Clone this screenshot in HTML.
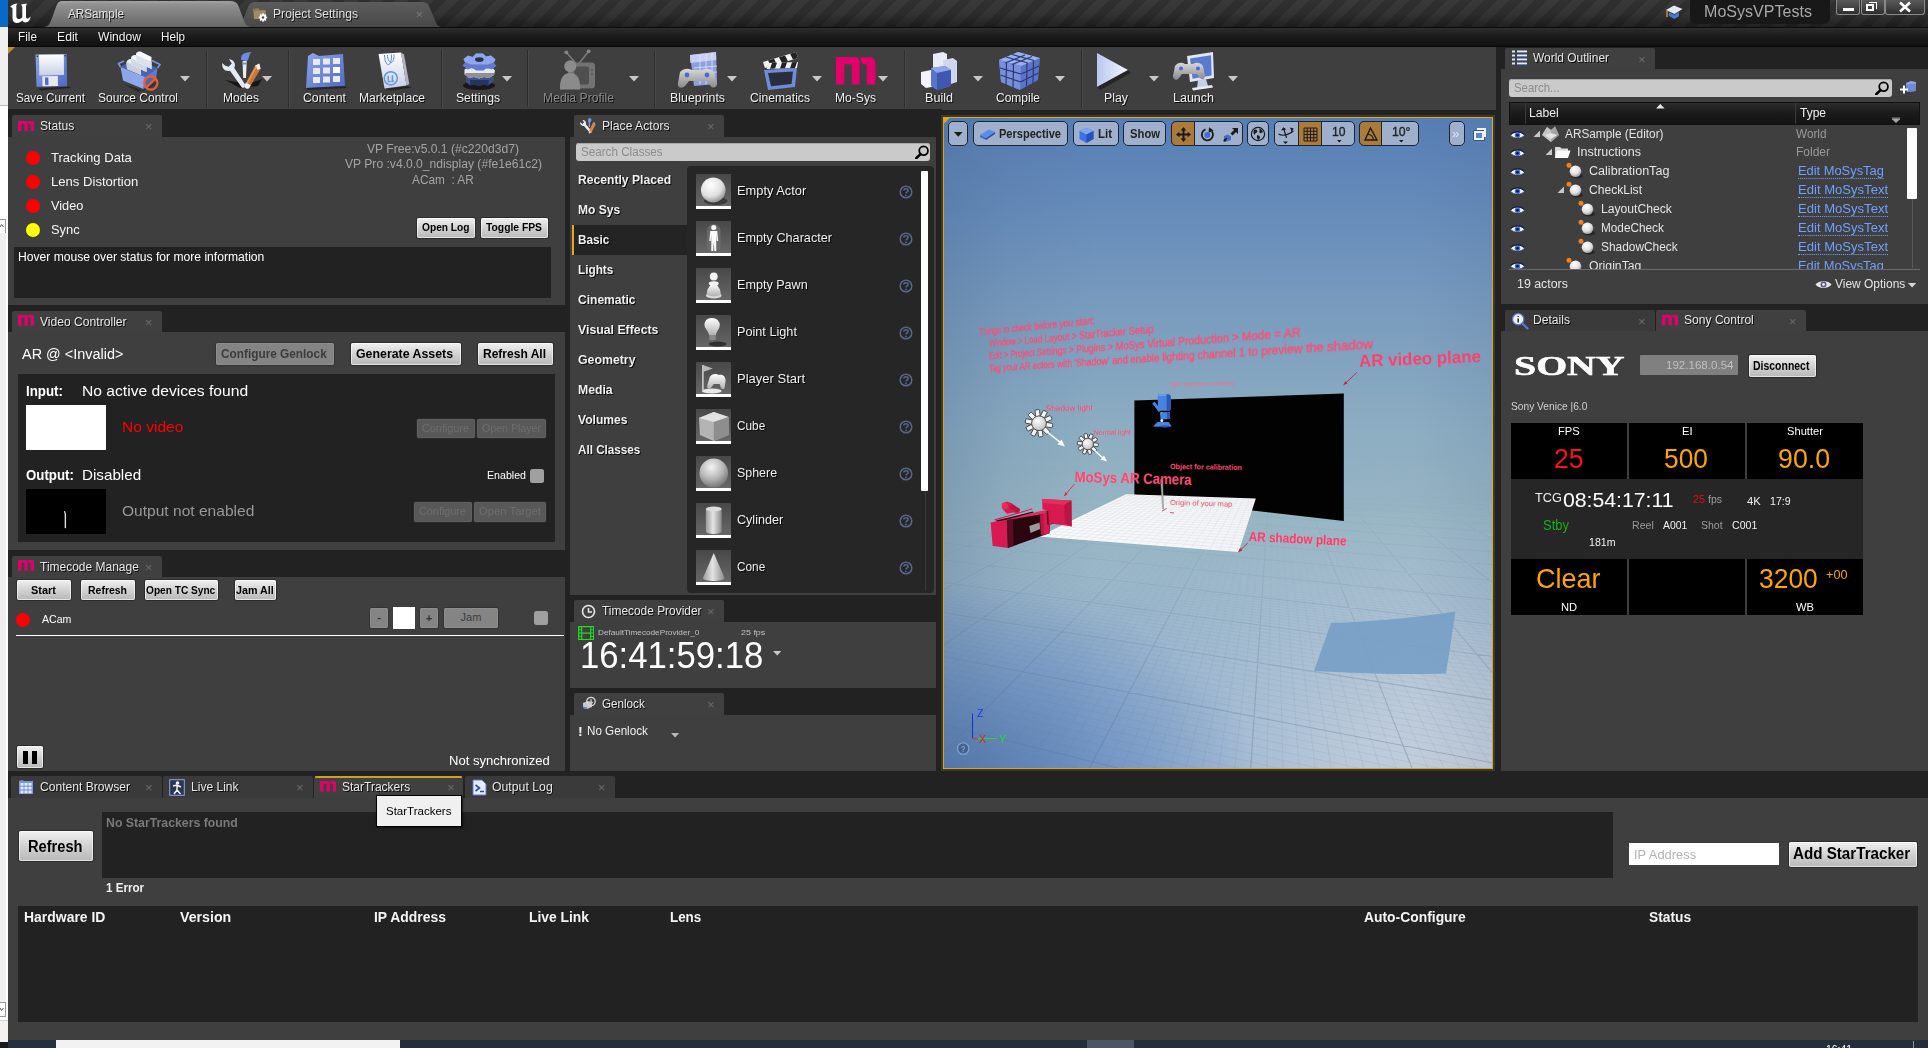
<!DOCTYPE html>
<html><head><meta charset="utf-8"><title>ARSample - Unreal Editor</title>
<style>
html,body{margin:0;padding:0;}
body{width:1928px;height:1048px;overflow:hidden;background:#222;position:relative;font-family:"Liberation Sans",sans-serif;}
div,span,svg{position:absolute;box-sizing:border-box;}
.t{white-space:nowrap;line-height:1;transform-origin:0 50%;}
.sh{text-shadow:1px 1px 0 rgba(0,0,0,.85);}
.btn{background:linear-gradient(#f0f0f0,#cfcfcf 55%,#b8b8b8);border-radius:2px;box-shadow:0 0 0 1px #2c2c2c,inset 0 0 0 1px rgba(255,255,255,.6);}
.btnd{background:#848484;border-radius:2px;box-shadow:0 0 0 1px #333,inset 0 0 0 1px #8e8e8e;}
.btnd2{background:#585858;border-radius:2px;box-shadow:0 0 0 1px #2a2a2a,inset 0 0 0 1px #5f5f5f;}
.tab{background:#404040;border-radius:2px 2px 0 0;}
.tabi{background:#3a3a3a;border-radius:2px 2px 0 0;}
.pn{background:#3f3f3f;}
.vb{background:#9fb0cc;border:1px solid #1c2433;border-radius:5px;}
</style></head><body>
<div style="left:0px;top:0px;width:8px;height:1048px;background:#ffffff;"></div>
<div style="left:0px;top:0px;width:8px;height:27px;background:#0a68c8;"></div>
<div style="left:0px;top:27px;width:8px;height:79px;background:#f0f0f0;"></div>
<div style="left:0px;top:105px;width:8px;height:1px;background:#bdbdbd;"></div>
<div style="left:0px;top:218.5px;width:6px;height:15px;background:#fff;border:1px solid #9a9a9a;border-left:none;"></div>
<div style="left:0px;top:233px;width:5.9px;height:770px;background:#f0f0f0;"></div>
<svg style="left:0;top:223px" width="4" height="5"><path d="M0 4 L1.5 1.5 L3.5 4" stroke="#555" fill="none" stroke-width="1"/></svg>
<div style="left:0px;top:1002px;width:6px;height:15px;background:#fff;border:1px solid #9a9a9a;border-left:none;"></div>
<svg style="left:0;top:1007px" width="4" height="5"><path d="M0 1 L1.5 3.5 L3.5 1" stroke="#555" fill="none" stroke-width="1"/></svg>
<div style="left:0px;top:1020.5px;width:8px;height:21.5px;background:#f3f2f1;"></div>
<div style="left:0px;top:1020px;width:8px;height:1px;background:#d0d0d0;"></div>
<div style="left:8px;top:0px;width:1920px;height:28px;background:repeating-linear-gradient(135deg,#303030 0 8.85px,#393939 8.85px 17.7px);"></div>
<div style="left:8px;top:0px;width:1920px;height:28px;background:linear-gradient(rgba(0,0,0,0),rgba(0,0,0,.1) 50%,rgba(0,0,0,.45));"></div>
<svg style="left:8px;top:0" width="460" height="28" viewBox="8 0 460 28">
<defs><linearGradient id="tg1" x1="0" y1="0" x2="0" y2="1"><stop offset="0" stop-color="#a2a2a2"/><stop offset=".15" stop-color="#909090"/><stop offset="1" stop-color="#686868"/></linearGradient>
<linearGradient id="tg2" x1="0" y1="0" x2="0" y2="1"><stop offset="0" stop-color="#5c5c5c"/><stop offset="1" stop-color="#484848"/></linearGradient></defs>
<path d="M240 27 L248 7 Q250 2 255 2 L422 2 Q427 2 429 6 L434 18 C436 23 437 27 442 27 Z" fill="url(#tg2)"/>
<path d="M44 27 C49 27 50 23 52 18 L56 7 C57.5 2.5 59 1 63 1 L230 1 Q236 1 238 5 L243 18 C245 23 246 27 251 27 Z" fill="url(#tg1)"/>
</svg>
<div style="left:8px;top:27px;width:1920px;height:1px;background:#0c0c0c;"></div>
<svg style="left:9px;top:1px" width="24" height="25" viewBox="0 0 24 25"><path fill="#fff" d="M1 6 C3 3.5 6 2.5 8.5 2.5 C7.5 3.5 7.3 4.5 7.3 6 L7.3 15 C7.3 17 8.3 18 9.8 18 C11 18 12.3 17.2 13.3 16.2 L13.3 6.5 C13.3 5 12.8 4.3 11.8 3.8 C13.8 2.8 16.3 2.5 18.3 2.8 C17.3 3.5 17 4.5 17 6 L17 15.5 C17 17 17.5 17.6 18.5 17.6 C19.5 17.6 20.5 16.8 21.5 15.5 C21.5 18.5 19 21.5 16.5 21.5 C15 21.5 14 20.8 13.3 19.5 C12 21 10 22 8 22 C5.3 22 3.5 20.3 3.5 17.3 L3.5 8 C3.5 6.8 2.5 6.2 1 6 Z"/></svg>
<span class="t sh" style="left:67.50px;top:7.50px;font-size:12.5px;color:#e4e4e4;transform:scaleX(0.9373);">ARSample</span>
<span class="t sh" style="left:272.50px;top:8.00px;font-size:12.5px;color:#e0e0e0;transform:scaleX(0.9710);">Project Settings</span>
<span class="t" style="left:415.50px;top:7.78px;font-size:13px;color:#777;transform:scaleX(1.0000);">×</span>
<svg style="left:252px;top:6px" width="16" height="16" viewBox="0 0 16 16"><path d="M1 3 L6 2 L8 4 L13 4 L13 12 L2 13 Z" fill="#8a7a5c"/><path d="M2 5 L14 4.5 L13 13 L2 13 Z" fill="#a08c68"/><circle cx="11" cy="11.5" r="3.2" fill="#fff"/><circle cx="11" cy="11.5" r="1.3" fill="#444"/><path d="M11 7.3 V15.7 M6.8 11.5 H15.2 M8 8.5 L14 14.5 M14 8.5 L8 14.5" stroke="#fff" stroke-width="1.4"/><circle cx="11" cy="11.5" r="1.2" fill="#444"/></svg>
<div style="left:1690px;top:0px;width:140px;height:23.5px;background:#181818;border-radius:0 0 6px 6px;"></div>
<span class="t" style="left:1703.50px;top:3.32px;font-size:17px;color:#a8a8a8;transform:scaleX(0.9448);">MoSysVPTests</span>
<svg style="left:1664px;top:3px" width="20" height="18" viewBox="0 0 20 18"><path d="M2 7 L10 2.5 L18.5 6 L10.5 11 Z" fill="#dfe8f4"/><path d="M5 9.5 L5 13 L10.5 16 L15 13.2 L15 9 L10.5 11.8 Z" fill="#4a78c8"/><path d="M3 7.5 V14" stroke="#d9a23a" stroke-width="1.3"/></svg>
<div style="left:1836px;top:0px;width:24px;height:15px;background:linear-gradient(#5a5a5a,#2e2e2e);border:1px solid #8a8a8a;border-top:none;border-radius:0 0 3px 3px;"></div>
<div style="left:1860.5px;top:0px;width:24px;height:15px;background:linear-gradient(#5a5a5a,#2e2e2e);border:1px solid #8a8a8a;border-top:none;border-radius:0 0 3px 3px;"></div>
<div style="left:1885px;top:0px;width:40px;height:15px;background:linear-gradient(#5a5a5a,#2e2e2e);border:1px solid #8a8a8a;border-top:none;border-radius:0 0 3px 3px;"></div>
<div style="left:1843px;top:8px;width:11px;height:3px;background:#fff;"></div>
<div style="left:1866px;top:4px;width:8px;height:7px;border:2px solid #fff;"></div>
<div style="left:1869px;top:2px;width:8px;height:7px;border:1px solid #fff;border-left:none;border-bottom:none;"></div>
<svg style="left:1897.5px;top:1px" width="14" height="12" viewBox="0 0 14 12"><path d="M2 1.5 L12 10.5 M12 1.5 L2 10.5" stroke="#fff" stroke-width="2.6"/></svg>
<div style="left:8px;top:28px;width:1920px;height:19px;background:linear-gradient(#2d2d2d,#1a1a1a 45%,#101010);"></div>
<div style="left:8px;top:46px;width:1920px;height:1px;background:#070707;"></div>
<span class="t sh" style="left:17.50px;top:31.00px;font-size:12.5px;color:#f2f2f2;transform:scaleX(0.9434);">File</span>
<span class="t sh" style="left:56.50px;top:31.00px;font-size:12.5px;color:#f2f2f2;transform:scaleX(0.9750);">Edit</span>
<span class="t sh" style="left:97.50px;top:31.00px;font-size:12.5px;color:#f2f2f2;transform:scaleX(0.9672);">Window</span>
<span class="t sh" style="left:160.50px;top:31.00px;font-size:12.5px;color:#f2f2f2;transform:scaleX(0.9336);">Help</span>
<div style="left:8px;top:47px;width:1488px;height:63px;background:#3f3f3f;"></div>
<div style="left:8px;top:110px;width:1493px;height:6px;background:#222;"></div>
<svg style="left:8px;top:47px" width="8" height="8"><path d="M0 0 H7 L0 7 Z" fill="#b8922a"/></svg>
<div style="left:206px;top:50px;width:1px;height:57px;background:#2c2c2c;"></div>
<div style="left:207px;top:50px;width:1px;height:57px;background:#4a4a4a;"></div>
<div style="left:288px;top:50px;width:1px;height:57px;background:#2c2c2c;"></div>
<div style="left:289px;top:50px;width:1px;height:57px;background:#4a4a4a;"></div>
<div style="left:441px;top:50px;width:1px;height:57px;background:#2c2c2c;"></div>
<div style="left:442px;top:50px;width:1px;height:57px;background:#4a4a4a;"></div>
<div style="left:527px;top:50px;width:1px;height:57px;background:#2c2c2c;"></div>
<div style="left:528px;top:50px;width:1px;height:57px;background:#4a4a4a;"></div>
<div style="left:654px;top:50px;width:1px;height:57px;background:#2c2c2c;"></div>
<div style="left:655px;top:50px;width:1px;height:57px;background:#4a4a4a;"></div>
<div style="left:904px;top:50px;width:1px;height:57px;background:#2c2c2c;"></div>
<div style="left:905px;top:50px;width:1px;height:57px;background:#4a4a4a;"></div>
<div style="left:1081px;top:50px;width:1px;height:57px;background:#2c2c2c;"></div>
<div style="left:1082px;top:50px;width:1px;height:57px;background:#4a4a4a;"></div>
<span class="t sh" style="left:15.50px;top:91.80px;font-size:12.5px;color:#f0f0f0;transform:scaleX(0.9370);">Save Current</span>
<span class="t sh" style="left:97.50px;top:91.80px;font-size:12.5px;color:#f0f0f0;transform:scaleX(0.9596);">Source Control</span>
<span class="t sh" style="left:222.50px;top:91.80px;font-size:12.5px;color:#f0f0f0;transform:scaleX(0.9596);">Modes</span>
<span class="t sh" style="left:302.50px;top:91.80px;font-size:12.5px;color:#f0f0f0;transform:scaleX(0.9822);">Content</span>
<span class="t sh" style="left:358.50px;top:91.80px;font-size:12.5px;color:#f0f0f0;transform:scaleX(0.9694);">Marketplace</span>
<span class="t sh" style="left:455.50px;top:91.80px;font-size:12.5px;color:#f0f0f0;transform:scaleX(0.9742);">Settings</span>
<span class="t sh" style="left:542.50px;top:91.80px;font-size:12.5px;color:#8a8a8a;transform:scaleX(0.9733);">Media Profile</span>
<span class="t sh" style="left:669.50px;top:91.80px;font-size:12.5px;color:#f0f0f0;transform:scaleX(0.9895);">Blueprints</span>
<span class="t sh" style="left:749.50px;top:91.80px;font-size:12.5px;color:#f0f0f0;transform:scaleX(0.9706);">Cinematics</span>
<span class="t sh" style="left:834.50px;top:91.80px;font-size:12.5px;color:#f0f0f0;transform:scaleX(0.9678);">Mo-Sys</span>
<span class="t sh" style="left:924.50px;top:91.80px;font-size:12.5px;color:#f0f0f0;transform:scaleX(1.0074);">Build</span>
<span class="t sh" style="left:995.50px;top:91.80px;font-size:12.5px;color:#f0f0f0;transform:scaleX(0.9597);">Compile</span>
<span class="t sh" style="left:1103.50px;top:91.80px;font-size:12.5px;color:#f0f0f0;transform:scaleX(0.9870);">Play</span>
<span class="t sh" style="left:1172.50px;top:91.80px;font-size:12.5px;color:#f0f0f0;transform:scaleX(0.9999);">Launch</span>
<svg style="left:180px;top:76px" width="10" height="6"><path d="M0 0 H10 L5 5.5 Z" fill="#c8c8c8"/></svg>
<svg style="left:262px;top:76px" width="10" height="6"><path d="M0 0 H10 L5 5.5 Z" fill="#c8c8c8"/></svg>
<svg style="left:502px;top:76px" width="10" height="6"><path d="M0 0 H10 L5 5.5 Z" fill="#c8c8c8"/></svg>
<svg style="left:629px;top:76px" width="10" height="6"><path d="M0 0 H10 L5 5.5 Z" fill="#c8c8c8"/></svg>
<svg style="left:727px;top:76px" width="10" height="6"><path d="M0 0 H10 L5 5.5 Z" fill="#c8c8c8"/></svg>
<svg style="left:812px;top:76px" width="10" height="6"><path d="M0 0 H10 L5 5.5 Z" fill="#c8c8c8"/></svg>
<svg style="left:878px;top:76px" width="10" height="6"><path d="M0 0 H10 L5 5.5 Z" fill="#c8c8c8"/></svg>
<svg style="left:973px;top:76px" width="10" height="6"><path d="M0 0 H10 L5 5.5 Z" fill="#c8c8c8"/></svg>
<svg style="left:1055px;top:76px" width="10" height="6"><path d="M0 0 H10 L5 5.5 Z" fill="#c8c8c8"/></svg>
<svg style="left:1149px;top:76px" width="10" height="6"><path d="M0 0 H10 L5 5.5 Z" fill="#c8c8c8"/></svg>
<svg style="left:1228px;top:76px" width="10" height="6"><path d="M0 0 H10 L5 5.5 Z" fill="#c8c8c8"/></svg>
<svg style="left:8px;top:47px" width="1493" height="62" viewBox="8 47 1493 62">
<defs>
<linearGradient id="bl" x1="0" y1="0" x2="1" y2="1"><stop offset="0" stop-color="#8fa6ea"/><stop offset="1" stop-color="#5068c0"/></linearGradient>
<linearGradient id="wh" x1="0" y1="0" x2="0" y2="1"><stop offset="0" stop-color="#ffffff"/><stop offset="1" stop-color="#c9d0e6"/></linearGradient>
<linearGradient id="gr" x1="0" y1="0" x2="0" y2="1"><stop offset="0" stop-color="#d8d8d8"/><stop offset="1" stop-color="#8a8a8a"/></linearGradient>
<linearGradient id="pl" x1="0" y1="0" x2="1" y2="0"><stop offset="0" stop-color="#b8c8ee"/><stop offset="1" stop-color="#f4f7ff"/></linearGradient>
</defs>
<!-- Save -->
<g><path d="M38 88.5 L69 86.5 L71 88 L41 90.5 Z" fill="#111" opacity=".6"/><path d="M35.5 54.5 L66.5 54 L67.2 86.3 L36.5 86.8 Z" fill="url(#bl)"/><path d="M39 54.8 L63.8 54.4 L64 75 L39.3 75.4 Z" fill="url(#wh)"/><path d="M42.3 76.2 L57.8 76 L58 86 L42.5 86.2 Z" fill="#e6e9f4"/><path d="M45 77.5 L48.3 77.4 L48.5 85 L45.2 85 Z" fill="#5068c0"/><circle cx="37.3" cy="56.3" r=".8" fill="#223"/><circle cx="65.2" cy="55.8" r=".8" fill="#223"/></g>
<!-- Source Control -->
<g><path d="M124 84 L142 90 L160 80 L150 88 L138 92 Z" fill="#111" opacity=".5"/>
<path d="M120.5 67 L134 59 L157.5 68 L145 77 Z" fill="#4c64b8"/>
<path d="M120.5 67 L145 77 L143.5 89 L123 80.5 Z" fill="#8ea6ea"/><path d="M145 77 L157.5 68 L156 79 L143.5 89 Z" fill="#5f7cd2"/>
<path d="M126.5 62 C128 59 130 58.5 132 59.5 L141 64 L141 75 L127 69 Z" fill="#e9edf2"/><path d="M126.5 62 L141 68 L141 75 L127 69Z" fill="#c9d0da"/>
<path d="M131 57.5 C132.5 55 134.5 54.5 136.5 55.5 L146.5 60.5 L146.5 72 L131.5 65 Z" fill="#f2f4f7"/><path d="M131 58.5 L146.5 65 L146.5 72 L131.5 65Z" fill="#d3d9e2"/>
<path d="M136 53.5 C137.5 51.5 139.5 51 141.5 52 L151.5 57 L151.5 69 L136.5 62 Z" fill="#f7f8fa"/><path d="M136 55 L151.5 62 L151.5 69 L136.5 62Z" fill="#dde2ea"/>
<path d="M120.5 67 L118.5 63.5 L124 61 M157.5 68 L160 64.5 L152 60.5" fill="none" stroke="#7c96e2" stroke-width="1.6"/>
<circle cx="150.8" cy="83.1" r="6.6" fill="#3f3f3f" fill-opacity=".35" stroke="#e2603c" stroke-width="2.3"/><path d="M146.2 87.7 L155.4 78.5" stroke="#e2603c" stroke-width="2.3"/></g>
<!-- Modes -->
<g><path d="M225 80 L240 88 L258 86 L262 79 L248 84 Z" fill="#0c0c0c" opacity=".8"/>
<path d="M222.3 63 C221.5 68.5 225 71.8 230 70.8 L241.5 87 C243 89 246.5 87 245.3 84.8 L234.3 68 C236.3 63.5 233.5 59.5 229 59.3 L231.8 63.6 L228.6 66.8 L224.8 65.6 Z" fill="#e3ebf8"/>
<path d="M241.3 60 C240.3 55 243.5 52.3 251.5 52 C248.5 54.5 249.8 58.5 246.8 61 Z" fill="#6f8cde"/><path d="M242.5 61 H246.7 L246 78 H243.2 Z" fill="#e8ecf4"/><path d="M242.6 62.5 H246.6 V64.5 H242.6Z" fill="#8a94a8"/>
<path d="M259.3 63.5 L260.6 68.8 L249.3 87.8 C248 89.8 243.5 88 244.5 85.5 L255 65.8 Z" fill="#c9783a"/><path d="M255 65.8 L259.3 63.5 L260.6 68.8 L257.5 69.8Z" fill="#f3f3f3"/><path d="M244.5 85.5 L246 82.5 L250.8 85.2 L249.3 87.8 C248 89.8 243.5 88 244.5 85.5Z" fill="#eef2f8"/><path d="M256.5 66.5 L247 83.5" stroke="#e9a064" stroke-width="1.2"/></g>
<!-- Content -->
<g><path d="M308 56 L313 53 L319 56 L343 54 L345 86 L306 88 Z" fill="url(#bl)"/>
<g fill="#e6eaf8"><rect x="313" y="59" width="7" height="6"/><rect x="323" y="58.5" width="7" height="6"/><rect x="333" y="58" width="7" height="6"/><rect x="313" y="68" width="7" height="6"/><rect x="323" y="67.5" width="7" height="6"/><rect x="333" y="67" width="7" height="6" fill="#fff"/><rect x="313" y="77" width="7" height="6"/><rect x="323" y="76.5" width="7" height="6"/><rect x="333" y="76" width="7" height="6"/></g><path d="M306 88 L345 86 L347 88 L308 90 Z" fill="#151515" opacity=".6"/></g>
<!-- Marketplace -->
<g><path d="M386 89 L407 86 L412 87.5 L391 90.5 Z" fill="#0c0c0c" opacity=".55"/>
<path d="M378.5 54 L401 52.5 L406.5 85.5 L384.5 88.5 Z" fill="url(#wh)"/><path d="M401 52.5 L404 54.5 L409.3 84 L406.5 85.5 Z" fill="#b9b2c4"/>
<path d="M384.5 55 C385 68 392 68 391.5 54.5 M387.5 55 C388 65 394.5 65 394 54.5" fill="none" stroke="#5b86da" stroke-width="1"/>
<circle cx="390.8" cy="78.3" r="6.6" fill="none" stroke="#5e98e2" stroke-width="1.5"/><path d="M387.5 75.5 C388.5 75.3 389 75.8 389 76.8 V80 C389 81.6 391.2 81.6 391.6 80.4 V76.2 C391.6 75.4 392.4 75 393.2 75.2 V80 C393.2 80.8 393.8 81 394.4 80.6 C393.8 82.6 391.6 82.8 391.2 81.6 C390.2 83 387.6 82.6 387.6 80.4 Z" fill="#5e98e2"/></g>
<!-- Settings -->
<g><ellipse cx="479" cy="85.5" rx="16" ry="4.5" fill="#0c0c0c" opacity=".75"/>
<path d="M466 77 L470 74.5 L474 76 L478 74 L483 74 L486 76 L491 75 L494 78 L493 82 L488 85.5 L483 84.5 L479 86 L474 84.5 L470 85.5 L466 82 Z" fill="#3d5188"/><path d="M470 80 L489 80 L488 85.5 L483 84.5 L479 86 L474 84.5 L470 85.5Z" fill="#26335c"/>
<path d="M464.5 69.5 L469 67 L473 68.5 L478 66.5 L483 66.5 L487 68.5 L492 67.5 L495 70.5 L494 75 L489 78 L484 77 L479 78.5 L474 77 L469 78 L464.5 74.5 Z" fill="#e9e9ec"/><path d="M466 73 L494 73 L494 75 L489 78 L484 77 L479 78.5 L474 77 L469 78 L464.5 74.5Z" fill="#8f8f96"/>
<path d="M463.5 59 L468 55.5 L472.5 57 L476 53.5 L483 53.5 L486 56.5 L491 55.5 L495.5 59.5 L494 63 L496.5 66 L491.5 69.5 L487 68 L483.5 70.5 L476 70.5 L472.5 68 L467.5 69.5 L462.5 65.5 L465 62.5 Z" fill="#5f7ad0"/><path d="M463.5 59 L468 55.5 L472.5 57 L476 53.5 L483 53.5 L486 56.5 L491 55.5 L495.5 59.5 L494 62 L488 64.5 L471 64.5 L465 62 Z" fill="#8fa6ea"/><ellipse cx="479.3" cy="59.6" rx="4.3" ry="2.3" fill="#28304e"/></g>
<!-- Media Profile (disabled) -->
<g><path d="M566.5 52.5 L576 63.5 M588.5 51.5 L579 63.5" stroke="#7e7e7e" stroke-width="1.4"/><circle cx="566.3" cy="52.3" r="1.9" fill="#868686"/><circle cx="588.7" cy="51.3" r="1.9" fill="#868686"/>
<rect x="568" y="62.5" width="27" height="26" rx="3.5" fill="#737373"/><rect x="574" y="66.5" width="15" height="18" rx="2" fill="#4f4f4f"/><circle cx="592" cy="70" r="1" fill="#5a5a5a"/><circle cx="592" cy="74" r="1" fill="#5a5a5a"/>
<circle cx="570.3" cy="66.3" r="6" fill="#8b8b8b"/><path d="M560 89.5 C559.5 78 563.5 73 570 73 C577 73 580.5 78 580 89.5 Z" fill="#8b8b8b"/></g>
<!-- Blueprints -->
<g><path d="M690 55 L716 52 L717 84 L694 86 Z" fill="#8ea0e0"/><path d="M690 55 L716 52 L716.3 60 L690.3 63 Z" fill="#c8d0f0"/><path d="M700 55 V84 M706 54 V84 M712 53 V84 M694 68 L717 66 M694 74 L717 72" stroke="#dfe6ff" stroke-width=".8"/><path d="M680 72 C684 68 688 68 692 70 L702 70 C706 68 710 68 714 72 L717 84 C717 88 712 89 710 85 L707 81 L689 81 L685 86 C682 89 677 88 678 83 Z" fill="url(#gr)"/><circle cx="687" cy="75" r="2.4" fill="#4c6ad0"/><circle cx="707" cy="75" r="2.4" fill="#4c6ad0"/></g>
<!-- Cinematics -->
<g><path d="M763 62 L796 52 L798 58 L765 68 Z" fill="#f4f4f4"/><path d="M768 60.5 L774 58.7 L777 64.5 L771 66.3 Z M779 57.2 L785 55.4 L788 61.2 L782 63 Z M790 53.8 L796 52 L798 58 L793 59.5 Z" fill="#222"/><path d="M766 63 L798 62 L797 68 L767 69 Z" fill="#f0f0f0"/><path d="M772 63 L777 62.8 L775 68.6 L770 68.8 Z M782 62.5 L787 62.3 L785 68.2 L780 68.4 Z M792 62.2 L797 62 L795 68 L790 68.2 Z" fill="#222"/><path d="M764 70 L797 68 L795 87 L768 90 Z" fill="#6f8ad8"/><path d="M768 73 L793 71.5 L791.5 84 L771 86.3 Z" fill="#2a2e3c"/></g>
<!-- Build -->
<g><path d="M933 54 L943 52 L947 54 L947 80 L933 82 Z" fill="#e8ecf8"/><path d="M943 60 L953 58 L957 61 L957 82 L945 86 Z" fill="#cfd6ee"/><path d="M921 72 L931 70 L937 73 L937 86 L926 88 L921 84 Z" fill="#f2f4fa"/><path d="M931 68 L945 66 L951 70 L951 86 L937 90 L931 86 Z" fill="#5a74cc"/><path d="M931 68 L945 66 L951 70 L937 73 Z" fill="#8ea4e6"/><path d="M937 73 L951 70 L951 86 L937 90 Z" fill="#4058b0"/></g>
<!-- Compile -->
<g><path d="M999 60 L1018 52 L1040 58 L1038 80 L1020 90 L1001 82 Z" fill="#5a74cc"/><path d="M999 60 L1018 52 L1040 58 L1021 66 Z" fill="#9ab0ee"/><path d="M999 60 L1021 66 L1020 90 L1001 82 Z" fill="#7890dc"/><path d="M1006 57 L1028 63 M1012 54.5 L1034 60.5 M1006.5 62 L1006 85 M1013.5 64 L1013 88 M1000 68 L1021 74 M1000.5 75 L1020.5 82 M1027 63.5 L1026.5 86 M1033.5 61 L1033 83 M1021 74 L1039 66 M1020.5 82 L1038.5 73 M1025 55 L1005 63 M1032 56.5 L1012 64.5" stroke="#2c3870" stroke-width="1.2"/></g>
<!-- Play -->
<g><path d="M1097 53 L1128 70 L1097 87 Z" fill="url(#pl)"/><path d="M1097 87 L1128 70 L1131 73 L1100 90 Z" fill="#111" opacity=".55"/></g>
<!-- Launch -->
<g><path d="M1187 56 L1213 52 L1214 78 L1190 82 Z" fill="#dfe6f8"/><path d="M1190 58.5 L1211 55.3 L1211.6 75.6 L1192.5 78.8 Z" fill="#5a7ad0"/><path d="M1198 80 L1206 79 L1208 86 L1197 88 Z" fill="#c8d0e8"/><path d="M1192 88 L1212 85 L1213 87.5 L1193 90.5 Z" fill="#e8ecf8"/><path d="M1175 66 C1178 62 1182 62 1185 64 L1193 64 C1196 62 1200 62 1203 66 L1205 76 C1205 80 1201 80 1199 77 L1197 74 L1182 74 L1179 78 C1177 81 1173 80 1173 76 Z" fill="url(#gr)"/><circle cx="1181" cy="68.5" r="2" fill="#4c6ad0"/><circle cx="1198" cy="68.5" r="2" fill="#4c6ad0"/></g>
</svg>
<svg style="left:836.2px;top:57.1px" width="39.5" height="27.5" viewBox="0 0 39.5 27.5" preserveAspectRatio="none"><path fill="#e4006c" d="M0 0 H19 C22 0 23.75 2 23.75 5 V27.5 H15.8 V8.2 C15.8 7.6 15.4 7.25 14.8 7.25 H8.3 V27.5 H0 Z"/><path fill="#e4006c" d="M23.9 .3 H33.5 C37 .3 39.5 2.6 39.5 6.2 V27.5 H30.8 V9 C30.8 7.8 30.2 7.25 29 7.25 H26.3 Z"/></svg>
<div style="left:8px;top:109px;width:557px;height:6px;background:#222;"></div>
<div style="left:565px;top:109px;width:6px;height:670px;background:#222;"></div>
<div class="tab" style="left:12px;top:115px;width:150px;height:22px;"></div>
<span class="t sh" style="left:40.00px;top:120.20px;font-size:12.5px;color:#e8e8e8;transform:scaleX(0.9680);">Status</span>
<span class="t" style="left:144.70px;top:120.28px;font-size:13px;color:#6a6a6a;transform:scaleX(1.0000);">×</span>
<svg style="left:17.9px;top:120.5px" width="16.2" height="10.8" viewBox="0 0 39.5 27.5" preserveAspectRatio="none"><path fill="#e4006c" d="M0 0 H19 C22 0 23.75 2 23.75 5 V27.5 H15.8 V8.2 C15.8 7.6 15.4 7.25 14.8 7.25 H8.3 V27.5 H0 Z"/><path fill="#e4006c" d="M23.9 .3 H33.5 C37 .3 39.5 2.6 39.5 6.2 V27.5 H30.8 V9 C30.8 7.8 30.2 7.25 29 7.25 H26.3 Z"/></svg>
<div class="pn" style="left:8px;top:137px;width:557px;height:168px;"></div>
<div style="left:26px;top:151px;width:14px;height:14px;background:#ff0000;border-radius:50%;"></div>
<span class="t" style="left:50.60px;top:150.98px;font-size:13px;color:#f4f4f4;transform:scaleX(1.0045);">Tracking Data</span>
<div style="left:26px;top:175px;width:14px;height:14px;background:#ff0000;border-radius:50%;"></div>
<span class="t" style="left:50.60px;top:174.98px;font-size:13px;color:#f4f4f4;transform:scaleX(1.0068);">Lens Distortion</span>
<div style="left:26px;top:199px;width:14px;height:14px;background:#ff0000;border-radius:50%;"></div>
<span class="t" style="left:50.60px;top:198.98px;font-size:13px;color:#f4f4f4;transform:scaleX(0.9783);">Video</span>
<div style="left:26px;top:223px;width:14px;height:14px;background:#ffff00;border-radius:50%;"></div>
<span class="t" style="left:50.60px;top:222.98px;font-size:13px;color:#f4f4f4;transform:scaleX(0.9930);">Sync</span>
<span class="t" style="left:366.50px;top:143.02px;font-size:12px;color:#a4a4a4;transform:scaleX(1.0097);">VP Free:v5.0.1 (#c220d3d7)</span>
<span class="t" style="left:344.50px;top:158.42px;font-size:12px;color:#a4a4a4;transform:scaleX(1.0090);">VP Pro :v4.0.0_ndisplay (#fe1e61c2)</span>
<span class="t" style="left:411.50px;top:173.52px;font-size:12px;color:#a4a4a4;transform:scaleX(0.9843);white-space:pre;">ACam  : AR</span>
<div class="btn" style="left:417px;top:218px;width:58px;height:20px;"></div>
<span class="t" style="left:421.50px;top:221.66px;font-size:11px;color:#000;transform:scaleX(0.9255);font-weight:bold;">Open Log</span>
<div class="btn" style="left:481px;top:218px;width:67px;height:20px;"></div>
<span class="t" style="left:485.50px;top:221.66px;font-size:11px;color:#000;transform:scaleX(0.9383);font-weight:bold;">Toggle FPS</span>
<div style="left:14px;top:247px;width:537px;height:50.5px;background:#222;"></div>
<span class="t" style="left:17.80px;top:250.72px;font-size:12px;color:#fff;transform:scaleX(1.0090);">Hover mouse over status for more information</span>
<div style="left:8px;top:305px;width:557px;height:5.5px;background:#222;"></div>
<div class="tab" style="left:12px;top:310.5px;width:150px;height:21.5px;"></div>
<span class="t sh" style="left:40.00px;top:315.70px;font-size:12.5px;color:#e8e8e8;transform:scaleX(0.9687);">Video Controller</span>
<span class="t" style="left:144.70px;top:315.78px;font-size:13px;color:#6a6a6a;transform:scaleX(1.0000);">×</span>
<svg style="left:17.9px;top:315.2px" width="16.2" height="10.8" viewBox="0 0 39.5 27.5" preserveAspectRatio="none"><path fill="#e4006c" d="M0 0 H19 C22 0 23.75 2 23.75 5 V27.5 H15.8 V8.2 C15.8 7.6 15.4 7.25 14.8 7.25 H8.3 V27.5 H0 Z"/><path fill="#e4006c" d="M23.9 .3 H33.5 C37 .3 39.5 2.6 39.5 6.2 V27.5 H30.8 V9 C30.8 7.8 30.2 7.25 29 7.25 H26.3 Z"/></svg>
<div class="pn" style="left:8px;top:332px;width:557px;height:217.5px;"></div>
<span class="t" style="left:21.70px;top:346.48px;font-size:15.5px;color:#fff;transform:scaleX(0.9321);">AR @ &lt;Invalid&gt;</span>
<div class="btnd" style="left:216px;top:343px;width:117.5px;height:22px;"></div>
<span class="t" style="left:220.50px;top:347.50px;font-size:12.5px;color:#3c3c3c;transform:scaleX(0.9454);font-weight:bold;">Configure Genlock</span>
<div class="btn" style="left:350.5px;top:343px;width:110px;height:22px;"></div>
<span class="t" style="left:355.50px;top:347.50px;font-size:12.5px;color:#000;transform:scaleX(0.9878);font-weight:bold;">Generate Assets</span>
<div class="btn" style="left:477.5px;top:343px;width:75px;height:22px;"></div>
<span class="t" style="left:482.50px;top:347.50px;font-size:12.5px;color:#000;transform:scaleX(0.9615);font-weight:bold;">Refresh All</span>
<div style="left:18px;top:374px;width:537px;height:167.5px;background:#222;"></div>
<span class="t" style="left:25.50px;top:383.62px;font-size:14.5px;color:#fff;transform:scaleX(0.9191);font-weight:bold;">Input:</span>
<span class="t" style="left:81.70px;top:383.62px;font-size:14.5px;color:#fff;transform:scaleX(1.0789);">No active devices found</span>
<div style="left:26px;top:405px;width:80px;height:45px;background:#fff;"></div>
<span class="t" style="left:121.50px;top:419.20px;font-size:15px;color:#ff0000;transform:scaleX(1.0355);">No video</span>
<div class="btnd2" style="left:417px;top:418.5px;width:58px;height:19.5px;"></div>
<span class="t" style="left:421.50px;top:422.74px;font-size:11.5px;color:#6e6e6e;transform:scaleX(0.9425);">Configure</span>
<div class="btnd2" style="left:477px;top:418.5px;width:69px;height:19.5px;"></div>
<span class="t" style="left:481.50px;top:422.74px;font-size:11.5px;color:#6e6e6e;transform:scaleX(0.9229);">Open Player</span>
<span class="t" style="left:25.50px;top:467.62px;font-size:14.5px;color:#fff;transform:scaleX(0.9152);font-weight:bold;">Output:</span>
<span class="t" style="left:81.70px;top:467.62px;font-size:14.5px;color:#fff;transform:scaleX(1.0475);">Disabled</span>
<span class="t" style="left:486.70px;top:470.36px;font-size:11px;color:#fff;transform:scaleX(0.9661);">Enabled</span>
<div style="left:530px;top:468.5px;width:14px;height:14.5px;background:#a0a0a0;border-radius:2.5px;"></div>
<div style="left:26px;top:489px;width:80px;height:45px;background:#000;"></div>
<svg style="left:62px;top:509px" width="6" height="20"><path d="M2.5 2 L3.6 5 L3.6 19 L3 19 L3 5 Z" fill="#fff" stroke="#fff" stroke-width=".6"/></svg>
<span class="t" style="left:121.50px;top:503.62px;font-size:14.5px;color:#989898;transform:scaleX(1.0725);">Output not enabled</span>
<div class="btnd2" style="left:414px;top:502px;width:58px;height:19.5px;"></div>
<span class="t" style="left:418.50px;top:506.14px;font-size:11.5px;color:#6e6e6e;transform:scaleX(0.9425);">Configure</span>
<div class="btnd2" style="left:474px;top:502px;width:72px;height:19.5px;"></div>
<span class="t" style="left:478.50px;top:506.14px;font-size:11.5px;color:#6e6e6e;transform:scaleX(0.9828);">Open Target</span>
<div style="left:8px;top:549.5px;width:557px;height:6px;background:#222;"></div>
<div class="tab" style="left:12px;top:555.5px;width:150px;height:21.5px;"></div>
<span class="t sh" style="left:40.00px;top:560.70px;font-size:12.5px;color:#e8e8e8;transform:scaleX(0.9587);">Timecode Manage</span>
<span class="t" style="left:144.70px;top:560.78px;font-size:13px;color:#6a6a6a;transform:scaleX(1.0000);">×</span>
<svg style="left:17.9px;top:560px" width="16.2" height="10.8" viewBox="0 0 39.5 27.5" preserveAspectRatio="none"><path fill="#e4006c" d="M0 0 H19 C22 0 23.75 2 23.75 5 V27.5 H15.8 V8.2 C15.8 7.6 15.4 7.25 14.8 7.25 H8.3 V27.5 H0 Z"/><path fill="#e4006c" d="M23.9 .3 H33.5 C37 .3 39.5 2.6 39.5 6.2 V27.5 H30.8 V9 C30.8 7.8 30.2 7.25 29 7.25 H26.3 Z"/></svg>
<div class="pn" style="left:8px;top:577px;width:557px;height:194px;"></div>
<div class="btn" style="left:17px;top:580.2px;width:54.3px;height:20px;"></div>
<span class="t" style="left:30.50px;top:584.66px;font-size:11px;color:#000;transform:scaleX(0.9934);font-weight:bold;">Start</span>
<div class="btn" style="left:80.7px;top:580.2px;width:54.4px;height:20px;"></div>
<span class="t" style="left:87.60px;top:584.66px;font-size:11px;color:#000;transform:scaleX(0.9522);font-weight:bold;">Refresh</span>
<div class="btn" style="left:144.6px;top:580.2px;width:73.6px;height:20px;"></div>
<span class="t" style="left:145.80px;top:584.66px;font-size:11px;color:#000;transform:scaleX(0.9205);font-weight:bold;">Open TC Sync</span>
<div class="btn" style="left:234.7px;top:580.2px;width:41.4px;height:20px;"></div>
<span class="t" style="left:235.70px;top:584.66px;font-size:11px;color:#000;transform:scaleX(0.9711);font-weight:bold;">Jam All</span>
<div style="left:16px;top:612.8px;width:14px;height:14px;background:#ff0000;border-radius:50%;"></div>
<span class="t" style="left:41.50px;top:614.14px;font-size:11.5px;color:#fff;transform:scaleX(0.9170);">ACam</span>
<div class="btnd" style="left:370px;top:608px;width:18.3px;height:20px;"></div>
<span class="t" style="left:377.17px;top:612.16px;font-size:11px;color:#333;transform:scaleX(1.0000);font-weight:bold;">-</span>
<div style="left:392.6px;top:606.8px;width:22.5px;height:22.3px;background:#fff;"></div>
<div class="btnd" style="left:419.8px;top:608px;width:18.6px;height:20px;"></div>
<span class="t" style="left:425.79px;top:612.66px;font-size:11px;color:#333;transform:scaleX(1.0000);font-weight:bold;">+</span>
<div class="btnd" style="left:443.8px;top:608px;width:54.4px;height:20px;"></div>
<span class="t" style="left:460.61px;top:612.46px;font-size:11px;color:#3c3c3c;transform:scaleX(1.0000);">Jam</span>
<div style="left:534px;top:611px;width:14px;height:14px;background:#a0a0a0;border-radius:2.5px;"></div>
<div style="left:16px;top:634.7px;width:547.5px;height:1.2px;background:#fff;"></div>
<div class="btn" style="left:17px;top:746.3px;width:26.3px;height:21.7px;"></div>
<div style="left:23px;top:750.5px;width:5px;height:13.5px;background:#000;"></div>
<div style="left:32px;top:750.5px;width:5px;height:13.5px;background:#000;"></div>
<span class="t" style="left:448.90px;top:753.58px;font-size:13px;color:#fff;transform:scaleX(1.0036);">Not synchronized</span>
<div style="left:8px;top:771px;width:557px;height:5px;background:#222;"></div>
<div style="left:571px;top:109px;width:370px;height:6px;background:#222;"></div>
<div style="left:936px;top:109px;width:6px;height:670px;background:#222;"></div>
<div class="tab" style="left:574px;top:115px;width:150px;height:22px;"></div>
<span class="t sh" style="left:602.00px;top:120.20px;font-size:12.5px;color:#e8e8e8;transform:scaleX(0.9716);">Place Actors</span>
<span class="t" style="left:707.00px;top:120.28px;font-size:13px;color:#6a6a6a;transform:scaleX(1.0000);">×</span>
<svg style="left:579px;top:117px" width="18" height="18" viewBox="0 0 18 18"><path d="M1 5 C1 8 3 9 5 9 L11 16 L13 14.5 L7 7.5 C7.5 5 6 3 3.5 3 L5 5.2 L3.5 7 Z" fill="#e8ecf4"/><path d="M10 1 C12.5 1 13 3 12 4.5 L11 5.2 V10 H9.6 V5.2 C8.6 4 8.8 2 10 1Z" fill="#7a94e0"/><path d="M15.5 5 L16.5 7.5 L12.5 15.5 L9.8 16.5 L10.2 13.8 L14 5.6 Z" fill="#d08a48"/><path d="M10.2 13.8 L12.5 15.5 L9.8 16.5 Z" fill="#f0e0c0"/></svg>
<div class="pn" style="left:570px;top:137px;width:366px;height:457.5px;"></div>
<div style="left:576px;top:143px;width:354px;height:17.9px;background:#cacaca;border-radius:3px;box-shadow:inset 0 1px 0 #a8a8a8;"></div>
<span class="t" style="left:580.70px;top:146.00px;font-size:12.5px;color:#8c8c8c;transform:scaleX(0.9322);">Search Classes</span>
<svg style="left:914.5px;top:144.5px" width="14.5" height="14.5" viewBox="0 0 14 14"><circle cx="8.3" cy="5.6" r="4.2" fill="none" stroke="#000" stroke-width="1.7"/><path d="M5.3 8.8 L1.2 12.8" stroke="#000" stroke-width="2.4" stroke-linecap="round"/></svg>
<div style="left:572px;top:225px;width:115.2px;height:30px;background:#242424;"></div>
<div style="left:572px;top:225px;width:2px;height:30px;background:#e8a317;"></div>
<span class="t sh" style="left:577.60px;top:173.80px;font-size:12.5px;color:#f0f0f0;transform:scaleX(0.9711);font-weight:bold;">Recently Placed</span>
<span class="t sh" style="left:577.60px;top:203.80px;font-size:12.5px;color:#f0f0f0;transform:scaleX(0.9666);font-weight:bold;">Mo Sys</span>
<span class="t sh" style="left:577.60px;top:233.80px;font-size:12.5px;color:#f0f0f0;transform:scaleX(0.9384);font-weight:bold;">Basic</span>
<span class="t sh" style="left:577.60px;top:263.80px;font-size:12.5px;color:#f0f0f0;transform:scaleX(0.9416);font-weight:bold;">Lights</span>
<span class="t sh" style="left:577.60px;top:293.80px;font-size:12.5px;color:#f0f0f0;transform:scaleX(0.9625);font-weight:bold;">Cinematic</span>
<span class="t sh" style="left:577.60px;top:323.80px;font-size:12.5px;color:#f0f0f0;transform:scaleX(0.9836);font-weight:bold;">Visual Effects</span>
<span class="t sh" style="left:577.60px;top:353.80px;font-size:12.5px;color:#f0f0f0;transform:scaleX(0.9854);font-weight:bold;">Geometry</span>
<span class="t sh" style="left:577.60px;top:383.80px;font-size:12.5px;color:#f0f0f0;transform:scaleX(0.9768);font-weight:bold;">Media</span>
<span class="t sh" style="left:577.60px;top:413.80px;font-size:12.5px;color:#f0f0f0;transform:scaleX(0.9654);font-weight:bold;">Volumes</span>
<span class="t sh" style="left:577.60px;top:443.80px;font-size:12.5px;color:#f0f0f0;transform:scaleX(0.9340);font-weight:bold;">All Classes</span>
<div style="left:687.2px;top:165.5px;width:246.5px;height:427.5px;background:#262626;border-radius:4px;"></div>
<svg style="left:0;top:0" width="0" height="0"><defs>
<radialGradient id="sph" cx=".4" cy=".3" r=".75"><stop offset="0" stop-color="#ffffff"/><stop offset=".6" stop-color="#e0e0e0"/><stop offset="1" stop-color="#8a8a8a"/></radialGradient>
<radialGradient id="sph2" cx=".42" cy=".3" r=".75"><stop offset="0" stop-color="#f4f4f4"/><stop offset=".5" stop-color="#bcbcbc"/><stop offset="1" stop-color="#6e6e6e"/></radialGradient>
<linearGradient id="lin" x1="0" y1="0" x2="0" y2="1"><stop offset="0" stop-color="#ffffff"/><stop offset="1" stop-color="#b0b0b0"/></linearGradient>
<linearGradient id="cyl" x1="0" y1="0" x2="1" y2="0"><stop offset="0" stop-color="#9a9a9a"/><stop offset=".45" stop-color="#e4e4e4"/><stop offset="1" stop-color="#8a8a8a"/></linearGradient>
<linearGradient id="thb" x1="0" y1="0" x2="0" y2="1"><stop offset="0" stop-color="#484848"/><stop offset="1" stop-color="#6a6a6a"/></linearGradient>
</defs></svg>
<svg style="left:695.8px;top:174px" width="35.5" height="35" viewBox="0 0 36 35" preserveAspectRatio="none"><rect width="36" height="35" fill="url(#thb)"/><ellipse cx="20" cy="27" rx="12" ry="4" fill="#222" opacity=".6"/><circle cx="17.5" cy="16" r="12.5" fill="url(#sph)"/><rect y="32" width="36" height="3" fill="#fff"/></svg>
<span class="t sh" style="left:736.80px;top:183.88px;font-size:13px;color:#f0f0f0;transform:scaleX(0.9874);">Empty Actor</span>
<svg style="left:899.3px;top:184.5px" width="14" height="14" viewBox="0 0 14 14"><circle cx="7" cy="7" r="5.8" fill="none" stroke="#56678a" stroke-width="1.5"/><path d="M4.8 5.6 C4.8 3 9.2 3 9.2 5.6 C9.2 7 7 7 7 8.6" fill="none" stroke="#56678a" stroke-width="1.5"/><circle cx="7" cy="10.4" r=".9" fill="#56678a"/></svg>
<svg style="left:695.8px;top:221px" width="35.5" height="35" viewBox="0 0 36 35" preserveAspectRatio="none"><rect width="36" height="35" fill="url(#thb)"/><rect x="11" y="3" width="14" height="28" rx="7" fill="#707070" opacity=".7"/><circle cx="18" cy="6.5" r="2.6" fill="#fafafa"/><path d="M14.5 10 H21.5 L22.5 20 H21 L20.5 13 V30 H18.6 L18 21 L17.4 30 H15.5 V13 L15 20 H13.5 Z" fill="#fafafa"/><rect y="32" width="36" height="3" fill="#fff"/></svg>
<span class="t sh" style="left:736.80px;top:230.88px;font-size:13px;color:#f0f0f0;transform:scaleX(0.9740);">Empty Character</span>
<svg style="left:899.3px;top:231.5px" width="14" height="14" viewBox="0 0 14 14"><circle cx="7" cy="7" r="5.8" fill="none" stroke="#56678a" stroke-width="1.5"/><path d="M4.8 5.6 C4.8 3 9.2 3 9.2 5.6 C9.2 7 7 7 7 8.6" fill="none" stroke="#56678a" stroke-width="1.5"/><circle cx="7" cy="10.4" r=".9" fill="#56678a"/></svg>
<svg style="left:695.8px;top:268px" width="35.5" height="35" viewBox="0 0 36 35" preserveAspectRatio="none"><rect width="36" height="35" fill="url(#thb)"/><ellipse cx="18" cy="27.5" rx="8" ry="3" fill="#d8d8d8"/><path d="M11 26 C11 20 14 19 15 16 H21 C22 19 25 20 25 26 C25 29 11 29 11 26Z" fill="url(#lin)"/><ellipse cx="18" cy="15.5" rx="5" ry="2.2" fill="#f4f4f4"/><circle cx="18" cy="8.5" r="4" fill="#f2f2f2"/><rect y="32" width="36" height="3" fill="#fff"/></svg>
<span class="t sh" style="left:736.80px;top:277.88px;font-size:13px;color:#f0f0f0;transform:scaleX(0.9688);">Empty Pawn</span>
<svg style="left:899.3px;top:278.5px" width="14" height="14" viewBox="0 0 14 14"><circle cx="7" cy="7" r="5.8" fill="none" stroke="#56678a" stroke-width="1.5"/><path d="M4.8 5.6 C4.8 3 9.2 3 9.2 5.6 C9.2 7 7 7 7 8.6" fill="none" stroke="#56678a" stroke-width="1.5"/><circle cx="7" cy="10.4" r=".9" fill="#56678a"/></svg>
<svg style="left:695.8px;top:315px" width="35.5" height="35" viewBox="0 0 36 35" preserveAspectRatio="none"><rect width="36" height="35" fill="url(#thb)"/><ellipse cx="22" cy="29" rx="9" ry="2.5" fill="#1a1a1a" opacity=".7"/><path d="M16 3 C23 3 26 9 23 14 C21.5 16.5 20.5 18 20 20.5 H13.5 C13 18 11.5 16 9.5 13 C7 8 10 3 16 3Z" fill="url(#lin)"/><rect x="13.5" y="20.5" width="6.5" height="4.5" fill="#888"/><path d="M14.5 25 H19 L17 27.5Z" fill="#666"/><rect y="32" width="36" height="3" fill="#fff"/></svg>
<span class="t sh" style="left:736.80px;top:324.88px;font-size:13px;color:#f0f0f0;transform:scaleX(0.9750);">Point Light</span>
<svg style="left:899.3px;top:325.5px" width="14" height="14" viewBox="0 0 14 14"><circle cx="7" cy="7" r="5.8" fill="none" stroke="#56678a" stroke-width="1.5"/><path d="M4.8 5.6 C4.8 3 9.2 3 9.2 5.6 C9.2 7 7 7 7 8.6" fill="none" stroke="#56678a" stroke-width="1.5"/><circle cx="7" cy="10.4" r=".9" fill="#56678a"/></svg>
<svg style="left:695.8px;top:362px" width="35.5" height="35" viewBox="0 0 36 35" preserveAspectRatio="none"><rect width="36" height="35" fill="url(#thb)"/><ellipse cx="16" cy="29" rx="10" ry="2.6" fill="#e8e8e8"/><path d="M7 3 V28" stroke="#e0e0e0" stroke-width="1.4"/><path d="M7 3 L17 6.5 L7 10Z" fill="#b8b8b8"/><path d="M14 15 C17 11 21 12 23 13 C27 12 30 14 30 19 L29 26 C28 28 25 27 25 25 L24 22 H18 L15 26 C13 28 10.5 26 11.5 23Z" fill="url(#lin)"/><rect y="32" width="36" height="3" fill="#fff"/></svg>
<span class="t sh" style="left:736.80px;top:371.88px;font-size:13px;color:#f0f0f0;transform:scaleX(1.0012);">Player Start</span>
<svg style="left:899.3px;top:372.5px" width="14" height="14" viewBox="0 0 14 14"><circle cx="7" cy="7" r="5.8" fill="none" stroke="#56678a" stroke-width="1.5"/><path d="M4.8 5.6 C4.8 3 9.2 3 9.2 5.6 C9.2 7 7 7 7 8.6" fill="none" stroke="#56678a" stroke-width="1.5"/><circle cx="7" cy="10.4" r=".9" fill="#56678a"/></svg>
<svg style="left:695.8px;top:409px" width="35.5" height="35" viewBox="0 0 36 35" preserveAspectRatio="none"><rect width="36" height="35" fill="url(#thb)"/><path d="M3 9 L18 3 L33 8 L33 26 L18 32 L4 26Z" fill="#b4b4b4"/><path d="M3 9 L18 3 L33 8 L18 13Z" fill="#e2e2e2"/><path d="M18 13 L33 8 L33 26 L18 32Z" fill="#8e8e8e"/><rect y="32" width="36" height="3" fill="#fff"/></svg>
<span class="t sh" style="left:736.80px;top:418.88px;font-size:13px;color:#f0f0f0;transform:scaleX(0.9073);">Cube</span>
<svg style="left:899.3px;top:419.5px" width="14" height="14" viewBox="0 0 14 14"><circle cx="7" cy="7" r="5.8" fill="none" stroke="#56678a" stroke-width="1.5"/><path d="M4.8 5.6 C4.8 3 9.2 3 9.2 5.6 C9.2 7 7 7 7 8.6" fill="none" stroke="#56678a" stroke-width="1.5"/><circle cx="7" cy="10.4" r=".9" fill="#56678a"/></svg>
<svg style="left:695.8px;top:456px" width="35.5" height="35" viewBox="0 0 36 35" preserveAspectRatio="none"><rect width="36" height="35" fill="url(#thb)"/><circle cx="18" cy="17" r="14.5" fill="url(#sph2)"/><rect y="32" width="36" height="3" fill="#fff"/></svg>
<span class="t sh" style="left:736.80px;top:465.88px;font-size:13px;color:#f0f0f0;transform:scaleX(0.9565);">Sphere</span>
<svg style="left:899.3px;top:466.5px" width="14" height="14" viewBox="0 0 14 14"><circle cx="7" cy="7" r="5.8" fill="none" stroke="#56678a" stroke-width="1.5"/><path d="M4.8 5.6 C4.8 3 9.2 3 9.2 5.6 C9.2 7 7 7 7 8.6" fill="none" stroke="#56678a" stroke-width="1.5"/><circle cx="7" cy="10.4" r=".9" fill="#56678a"/></svg>
<svg style="left:695.8px;top:503px" width="35.5" height="35" viewBox="0 0 36 35" preserveAspectRatio="none"><rect width="36" height="35" fill="url(#thb)"/><path d="M10 6 V28 C10 32 26 32 26 28 V6Z" fill="url(#cyl)"/><ellipse cx="18" cy="6" rx="8" ry="2.6" fill="#dcdcdc"/><rect y="32" width="36" height="3" fill="#fff"/></svg>
<span class="t sh" style="left:736.80px;top:512.88px;font-size:13px;color:#f0f0f0;transform:scaleX(0.9667);">Cylinder</span>
<svg style="left:899.3px;top:513.5px" width="14" height="14" viewBox="0 0 14 14"><circle cx="7" cy="7" r="5.8" fill="none" stroke="#56678a" stroke-width="1.5"/><path d="M4.8 5.6 C4.8 3 9.2 3 9.2 5.6 C9.2 7 7 7 7 8.6" fill="none" stroke="#56678a" stroke-width="1.5"/><circle cx="7" cy="10.4" r=".9" fill="#56678a"/></svg>
<svg style="left:695.8px;top:550px" width="35.5" height="35" viewBox="0 0 36 35" preserveAspectRatio="none"><rect width="36" height="35" fill="url(#thb)"/><path d="M18 3 L29 28 C29 32 7 32 7 28Z" fill="url(#cyl)"/><rect y="32" width="36" height="3" fill="#fff"/></svg>
<span class="t sh" style="left:736.80px;top:559.88px;font-size:13px;color:#f0f0f0;transform:scaleX(0.9073);">Cone</span>
<svg style="left:899.3px;top:560.5px" width="14" height="14" viewBox="0 0 14 14"><circle cx="7" cy="7" r="5.8" fill="none" stroke="#56678a" stroke-width="1.5"/><path d="M4.8 5.6 C4.8 3 9.2 3 9.2 5.6 C9.2 7 7 7 7 8.6" fill="none" stroke="#56678a" stroke-width="1.5"/><circle cx="7" cy="10.4" r=".9" fill="#56678a"/></svg>
<div style="left:924.5px;top:171px;width:1px;height:420px;background:#3a3a3a;"></div>
<div style="left:921px;top:171px;width:7.2px;height:319.5px;background:#fff;border-radius:1px;"></div>
<div style="left:570px;top:594.5px;width:366px;height:5.5px;background:#222;"></div>
<div class="tab" style="left:574px;top:600px;width:150px;height:22px;"></div>
<span class="t sh" style="left:602.00px;top:605.20px;font-size:12.5px;color:#e8e8e8;transform:scaleX(0.9528);">Timecode Provider</span>
<span class="t" style="left:707.00px;top:605.28px;font-size:13px;color:#6a6a6a;transform:scaleX(1.0000);">×</span>
<svg style="left:580.5px;top:603.5px" width="15" height="15" viewBox="0 0 15 15"><circle cx="7.5" cy="7.5" r="6" fill="none" stroke="#e8e8e8" stroke-width="1.6"/><path d="M7.5 4 V8 H11" fill="none" stroke="#e8e8e8" stroke-width="1.5"/></svg>
<div class="pn" style="left:570px;top:622px;width:366px;height:65.6px;"></div>
<svg style="left:578px;top:626px" width="16.4" height="14.2" viewBox="0 0 16 14"><rect x=".6" y=".6" width="14.8" height="12.8" fill="none" stroke="#1fe01f" stroke-width="1.2"/><path d="M3.6 .6 V13.4 M12.4 .6 V13.4 M3.6 7 H12.4" stroke="#1fe01f" stroke-width="1.1"/><path d="M.6 3.8 H3.6 M.6 7 H3.6 M.6 10.2 H3.6 M12.4 3.8 H15.4 M12.4 7 H15.4 M12.4 10.2 H15.4" stroke="#1fe01f" stroke-width="1"/></svg>
<span class="t" style="left:597.60px;top:628.86px;font-size:7.6px;color:#c0c0c0;transform:scaleX(1.0797);">DefaultTimecodeProvider_0</span>
<span class="t" style="left:740.50px;top:628.86px;font-size:7.6px;color:#c0c0c0;transform:scaleX(1.1737);">25 fps</span>
<span class="t" style="left:579.90px;top:637.66px;font-size:36px;color:#fff;transform:scaleX(0.9638);">16:41:59:18</span>
<svg style="left:773px;top:651px" width="9" height="5"><path d="M0 0 H8.4 L4.2 4.5Z" fill="#c8c8c8"/></svg>
<div style="left:570px;top:687.6px;width:366px;height:5.5px;background:#222;"></div>
<div class="tab" style="left:574px;top:693px;width:150px;height:22px;"></div>
<span class="t sh" style="left:602.00px;top:698.20px;font-size:12.5px;color:#e8e8e8;transform:scaleX(0.9312);">Genlock</span>
<span class="t" style="left:707.00px;top:698.28px;font-size:13px;color:#6a6a6a;transform:scaleX(1.0000);">×</span>
<svg style="left:581.5px;top:696px" width="15" height="15" viewBox="0 0 15 15"><path d="M1 7 L6 5 L10 6 L10 11 L5 13 L1 12Z" fill="#c8c8c8"/><path d="M1 10.5 L5 11.5 L5 13 L1 12Z" fill="#5a7ad0"/><circle cx="9" cy="5.5" r="4.2" fill="none" stroke="#d8d8d8" stroke-width="1.3"/><path d="M9 3 V5.8 L11 7" fill="none" stroke="#d8d8d8" stroke-width="1.1"/></svg>
<div class="pn" style="left:570px;top:715px;width:366px;height:56px;"></div>
<span class="t" style="left:577.70px;top:724.58px;font-size:13px;color:#f0f0f0;transform:scaleX(1.1000);font-weight:bold;">!</span>
<span class="t" style="left:586.50px;top:725.00px;font-size:12.5px;color:#f0f0f0;transform:scaleX(0.9310);">No Genlock</span>
<svg style="left:671px;top:733px" width="9" height="5"><path d="M0 0 H8.2 L4.1 4.5Z" fill="#b8b8b8"/></svg>
<div style="left:570px;top:771px;width:366px;height:5px;background:#222;"></div>
<div style="left:941px;top:115px;width:554px;height:656px;background:#393939;"></div>
<div style="left:944px;top:118px;width:548.5px;height:650.5px;overflow:hidden;background:#88a6c4;">
<div style="left:0;top:0;width:552px;height:400px;background:linear-gradient(#577eb4 0%,#658bba 22%,#7b9dbe 50%,#8dadc2 78%,#9ab8c5 100%);"></div>
<div style="left:0;top:400px;width:552px;height:254px;background:linear-gradient(#9ab8c5 0%,#9cb8ca 25%,#93b0cd 60%,#7f9fcb 100%);"></div>
<div style="left:0;top:370px;width:552px;height:284px;background:radial-gradient(ellipse 90% 105% at 100% 100%,rgba(203,212,222,.97) 0%,rgba(196,208,220,.85) 30%,rgba(180,200,214,.55) 60%,rgba(165,190,208,0) 92%);"></div>
<div style="left:0;top:380px;width:552px;height:274px;background:radial-gradient(ellipse 70% 85% at 0% 100%,rgba(88,124,176,.95) 0%,rgba(98,136,190,.6) 40%,rgba(110,150,200,0) 80%);"></div>
<div style="left:0;top:0;width:552px;height:654px;background:linear-gradient(to right,rgba(70,100,140,.28) 0%,rgba(70,100,140,.1) 12%,rgba(70,100,140,0) 28%,rgba(70,100,140,0) 85%,rgba(70,100,140,.12) 100%);"></div>
<svg style="left:0;top:0" width="548.5" height="650.5" viewBox="944 118 548.5 650.5"><defs><linearGradient id="wp" x1="0" y1="0" x2="1" y2="1"><stop offset="0" stop-color="#ffffff"/><stop offset="1" stop-color="#f1f3f6"/></linearGradient><radialGradient id="lb" cx=".4" cy=".35" r=".7"><stop offset="0" stop-color="#fff"/><stop offset="1" stop-color="#bdbdbd"/></radialGradient></defs><defs><linearGradient id="gmg" x1="0" y1="440" x2="0" y2="770" gradientUnits="userSpaceOnUse"><stop offset="0" stop-color="#000"/><stop offset=".15" stop-color="#111"/><stop offset=".36" stop-color="#5a5a5a"/><stop offset=".62" stop-color="#b4b4b4"/><stop offset="1" stop-color="#fff"/></linearGradient><mask id="gmk" maskUnits="userSpaceOnUse" x="940" y="430" width="560" height="342"><rect x="940" y="430" width="560" height="342" fill="url(#gmg)"/></mask></defs><g mask="url(#gmk)" fill="none"><path d="M1149.4 432L-1327.0 770M1150.2 432L-1310.8 770M1151.0 432L-1294.6 770M1151.8 432L-1278.4 770M1152.5 432L-1262.2 770M1153.3 432L-1246.0 770M1154.1 432L-1229.8 770M1154.9 432L-1213.6 770M1155.7 432L-1197.3 770M1157.2 432L-1164.9 770M1158.0 432L-1148.7 770M1158.8 432L-1132.5 770M1159.5 432L-1116.3 770M1160.3 432L-1100.1 770M1161.1 432L-1083.9 770M1161.9 432L-1067.7 770M1162.6 432L-1051.4 770M1163.4 432L-1035.2 770M1165.0 432L-1002.8 770M1165.7 432L-986.6 770M1166.5 432L-970.4 770M1167.3 432L-954.2 770M1168.1 432L-938.0 770M1168.9 432L-921.8 770M1169.6 432L-905.5 770M1170.4 432L-889.3 770M1171.2 432L-873.1 770M1172.7 432L-840.7 770M1173.5 432L-824.5 770M1174.3 432L-808.3 770M1175.1 432L-792.1 770M1175.8 432L-775.8 770M1176.6 432L-759.6 770M1177.4 432L-743.4 770M1178.2 432L-727.2 770M1178.9 432L-711.0 770M1180.5 432L-678.6 770M1181.3 432L-662.4 770M1182.0 432L-646.2 770M1182.8 432L-629.9 770M1183.6 432L-613.7 770M1184.4 432L-597.5 770M1185.2 432L-581.3 770M1185.9 432L-565.1 770M1186.7 432L-548.9 770M1188.3 432L-516.5 770M1189.0 432L-500.3 770M1189.8 432L-484.0 770M1190.6 432L-467.8 770M1191.4 432L-451.6 770M1192.1 432L-435.4 770M1192.9 432L-419.2 770M1193.7 432L-403.0 770M1194.5 432L-386.8 770M1196.0 432L-354.4 770M1196.8 432L-338.1 770M1197.6 432L-321.9 770M1198.4 432L-305.7 770M1199.1 432L-289.5 770M1199.9 432L-273.3 770M1200.7 432L-257.1 770M1201.5 432L-240.9 770M1202.2 432L-224.7 770M1203.8 432L-192.2 770M1204.6 432L-176.0 770M1205.3 432L-159.8 770M1206.1 432L-143.6 770M1206.9 432L-127.4 770M1207.7 432L-111.2 770M1208.4 432L-95.0 770M1209.2 432L-78.8 770M1210.0 432L-62.5 770M1211.5 432L-30.1 770M1212.3 432L-13.9 770M1213.1 432L2.3 770M1213.9 432L18.5 770M1214.7 432L34.7 770M1215.4 432L50.9 770M1216.2 432L67.1 770M1217.0 432L83.4 770M1217.8 432L99.6 770M1219.3 432L132.0 770M1220.1 432L148.2 770M1220.9 432L164.4 770M1221.6 432L180.6 770M1222.4 432L196.8 770M1223.2 432L213.0 770M1224.0 432L229.3 770M1224.7 432L245.5 770M1225.5 432L261.7 770M1227.1 432L294.1 770M1227.9 432L310.3 770M1228.6 432L326.5 770M1229.4 432L342.7 770M1230.2 432L358.9 770M1231.0 432L375.2 770M1231.7 432L391.4 770M1232.5 432L407.6 770M1233.3 432L423.8 770M1234.8 432L456.2 770M1235.6 432L472.4 770M1236.4 432L488.6 770M1237.2 432L504.8 770M1237.9 432L521.1 770M1238.7 432L537.3 770M1239.5 432L553.5 770M1240.3 432L569.7 770M1241.0 432L585.9 770M1242.6 432L618.3 770M1243.4 432L634.5 770M1244.2 432L650.7 770M1244.9 432L667.0 770M1245.7 432L683.2 770M1246.5 432L699.4 770M1247.3 432L715.6 770M1248.0 432L731.8 770M1248.8 432L748.0 770M1250.4 432L780.4 770M1251.1 432L796.7 770M1251.9 432L812.9 770M1252.7 432L829.1 770M1253.5 432L845.3 770M1254.2 432L861.5 770M1255.0 432L877.7 770M1255.8 432L893.9 770M1256.6 432L910.1 770M1258.1 432L942.6 770M1258.9 432L958.8 770M1259.7 432L975.0 770M1260.5 432L991.2 770M1261.2 432L1007.4 770M1262.0 432L1023.6 770M1262.8 432L1039.8 770M1263.6 432L1056.0 770M1264.3 432L1072.2 770M1265.9 432L1104.7 770M1266.7 432L1120.9 770M1267.4 432L1137.1 770M1268.2 432L1153.3 770M1269.0 432L1169.5 770M1269.8 432L1185.7 770M1270.5 432L1201.9 770M1271.3 432L1218.1 770M1272.1 432L1234.4 770M1273.7 432L1266.8 770M1274.4 432L1283.0 770M1275.2 432L1299.2 770M1276.0 432L1315.4 770M1276.8 432L1331.6 770M1277.5 432L1347.8 770M1278.3 432L1364.0 770M1279.1 432L1380.3 770M1279.9 432L1396.5 770M1281.4 432L1428.9 770M1282.2 432L1445.1 770M1283.0 432L1461.3 770M1283.7 432L1477.5 770M1284.5 432L1493.7 770M1285.3 432L1509.9 770M1286.1 432L1526.2 770M1286.9 432L1542.4 770M1287.6 432L1558.6 770M1289.2 432L1591.0 770M1290.0 432L1607.2 770M1290.7 432L1623.4 770M1291.5 432L1639.6 770M1292.3 432L1655.9 770M1293.1 432L1672.1 770M1293.8 432L1688.3 770M1294.6 432L1704.5 770M1295.4 432L1720.7 770M1296.9 432L1753.1 770M1297.7 432L1769.3 770M1298.5 432L1785.5 770M1299.3 432L1801.8 770M1300.0 432L1818.0 770M1300.8 432L1834.2 770M1301.6 432L1850.4 770M1302.4 432L1866.6 770M1303.2 432L1882.8 770M1304.7 432L1915.2 770M1305.5 432L1931.4 770M1306.3 432L1947.7 770M1307.0 432L1963.9 770M1307.8 432L1980.1 770M1308.6 432L1996.3 770M1309.4 432L2012.5 770M1310.1 432L2028.7 770M1310.9 432L2044.9 770M1312.5 432L2077.3 770M1313.2 432L2093.6 770M1314.0 432L2109.8 770M1314.8 432L2126.0 770M1315.6 432L2142.2 770M1316.4 432L2158.4 770M1317.1 432L2174.6 770M1317.9 432L2190.8 770M1318.7 432L2207.0 770M1320.2 432L2239.5 770M1321.0 432L2255.7 770M1321.8 432L2271.9 770M1322.6 432L2288.1 770M1323.3 432L2304.3 770M1324.1 432L2320.5 770M1324.9 432L2336.7 770M1325.7 432L2352.9 770M1326.4 432L2369.1 770M1328.0 432L2401.6 770M1328.8 432L2417.8 770M1329.5 432L2434.0 770M1330.3 432L2450.2 770M1331.1 432L2466.4 770M1331.9 432L2482.6 770M1332.7 432L2498.8 770M1333.4 432L2515.1 770M1334.2 432L2531.3 770M1335.8 432L2563.7 770M1336.5 432L2579.9 770M1337.3 432L2596.1 770M1338.1 432L2612.3 770M1338.9 432L2628.5 770M1339.6 432L2644.7 770M1340.4 432L2661.0 770M1341.2 432L2677.2 770M1342.0 432L2693.4 770M1343.5 432L2725.8 770M1344.3 432L2742.0 770M1345.1 432L2758.2 770M1345.9 432L2774.4 770M1346.6 432L2790.6 770M1347.4 432L2806.9 770M1348.2 432L2823.1 770M1349.0 432L2839.3 770M1349.7 432L2855.5 770M1351.3 432L2887.9 770M1352.1 432L2904.1 770M1352.8 432L2920.3 770M1353.6 432L2936.5 770M1354.4 432L2952.8 770M1355.2 432L2969.0 770M1355.9 432L2985.2 770M1356.7 432L3001.4 770M1357.5 432L3017.6 770M1359.0 432L3050.0 770M1359.8 432L3066.2 770M1360.6 432L3082.4 770M1361.4 432L3098.7 770M1362.2 432L3114.9 770M1362.9 432L3131.1 770M1363.7 432L3147.3 770M1364.5 432L3163.5 770M1365.3 432L3179.7 770M1366.8 432L3212.1 770M1367.6 432L3228.4 770M1368.4 432L3244.6 770M1369.1 432L3260.8 770M1369.9 432L3277.0 770M1370.7 432L3293.2 770M1371.5 432L3309.4 770M1372.2 432L3325.6 770M1373.0 432L3341.8 770M1374.6 432L3374.3 770M1375.4 432L3390.5 770M1376.1 432L3406.7 770M1376.9 432L3422.9 770M1377.7 432L3439.1 770M1378.5 432L3455.3 770M1379.2 432L3471.5 770M1380.0 432L3487.7 770M1380.8 432L3503.9 770M1382.3 432L3536.4 770M1383.1 432L3552.6 770M1383.9 432L3568.8 770M1384.7 432L3585.0 770M1385.4 432L3601.2 770M1386.2 432L3617.4 770M1387.0 432L3633.6 770M1387.8 432L3649.8 770M1388.5 432L3666.1 770M1390.1 432L3698.5 770M1390.9 432L3714.7 770M1391.7 432L3730.9 770M1392.4 432L3747.1 770M1393.2 432L3763.3 770M1394.0 432L3779.5 770M1394.8 432L3795.7 770M1395.5 432L3812.0 770M1396.3 432L3828.2 770M944 1084.7L1494 1380.8M944 1046.1L1494 1325.1M944 1011.7L1494 1275.6M944 980.9L1494 1231.1M944 953.1L1494 1191.0M944 927.9L1494 1154.6M944 904.9L1494 1121.6M944 884.0L1494 1091.3M944 864.7L1494 1063.5M944 830.6L1494 1014.3M944 815.4L1494 992.4M944 801.3L1494 972.0M944 788.1L1494 953.0M944 775.8L1494 935.3M944 764.3L1494 918.7M944 753.5L1494 903.2M944 743.3L1494 888.5M944 733.8L1494 874.7M944 716.2L1494 849.4M944 708.2L1494 837.8M944 700.5L1494 826.8M944 693.3L1494 816.3M944 686.4L1494 806.4M944 679.8L1494 796.9M944 673.6L1494 787.9M944 667.6L1494 779.3M944 661.9L1494 771.1M944 651.3L1494 755.7M944 646.3L1494 748.5M944 641.5L1494 741.6M944 636.9L1494 735.0M944 632.5L1494 728.6M944 628.3L1494 722.5M944 624.2L1494 716.7M944 620.3L1494 711.0M944 616.5L1494 705.6M944 609.3L1494 695.3M944 605.9L1494 690.4M944 602.7L1494 685.6M944 599.5L1494 681.1M944 596.5L1494 676.7M944 593.5L1494 672.4M944 590.6L1494 668.3M944 587.9L1494 664.3M944 585.2L1494 660.4M944 580.0L1494 653.0M944 577.6L1494 649.5M944 575.2L1494 646.0M944 572.9L1494 642.7M944 570.7L1494 639.5M944 568.5L1494 636.3M944 566.4L1494 633.3M944 564.3L1494 630.3M944 562.3L1494 627.4M944 558.4L1494 621.8M944 556.6L1494 619.2M944 554.8L1494 616.6M944 553.0L1494 614.0M944 551.3L1494 611.5M944 549.6L1494 609.1M944 548.0L1494 606.8M944 546.4L1494 604.5M944 544.8L1494 602.2M944 541.8L1494 597.9M944 540.4L1494 595.8M944 538.9L1494 593.7M944 537.6L1494 591.7M944 536.2L1494 589.8M944 534.9L1494 587.9M944 533.6L1494 586.0M944 532.3L1494 584.2M944 531.1L1494 582.4M944 528.7L1494 578.9M944 527.5L1494 577.2M944 526.3L1494 575.6M944 525.2L1494 574.0M944 524.1L1494 572.4M944 523.0L1494 570.8M944 522.0L1494 569.3M944 521.0L1494 567.8M944 519.9L1494 566.3M944 518.0L1494 563.5M944 517.0L1494 562.1M944 516.1L1494 560.8M944 515.1L1494 559.4M944 514.2L1494 558.1M944 513.3L1494 556.8M944 512.5L1494 555.6M944 511.6L1494 554.3M944 510.8L1494 553.1M944 509.1L1494 550.7M944 508.3L1494 549.6M944 507.5L1494 548.4M944 506.8L1494 547.3M944 506.0L1494 546.2M944 505.2L1494 545.1M944 504.5L1494 544.1M944 503.8L1494 543.0M944 503.1L1494 542.0M944 501.7L1494 540.0M944 501.0L1494 539.0M944 500.3L1494 538.0M944 499.7L1494 537.1M944 499.0L1494 536.2M944 498.4L1494 535.2M944 497.7L1494 534.3M944 497.1L1494 533.4M944 496.5L1494 532.5M944 495.3L1494 530.8M944 494.7L1494 530.0M944 494.2L1494 529.1M944 493.6L1494 528.3M944 493.0L1494 527.5M944 492.5L1494 526.7M944 491.9L1494 525.9M944 491.4L1494 525.2M944 490.9L1494 524.4M944 489.8L1494 522.9M944 489.3L1494 522.2M944 488.8L1494 521.5M944 488.3L1494 520.7M944 487.8L1494 520.0M944 487.4L1494 519.3M944 486.9L1494 518.7M944 486.4L1494 518.0M944 485.9L1494 517.3M944 485.0L1494 516.0M944 484.6L1494 515.4M944 484.2L1494 514.7M944 483.7L1494 514.1M944 483.3L1494 513.5M944 482.9L1494 512.9M944 482.5L1494 512.3M944 482.0L1494 511.7M944 481.6L1494 511.1M944 480.8L1494 509.9M944 480.4L1494 509.4M944 480.0L1494 508.8M944 479.7L1494 508.3M944 479.3L1494 507.7M944 478.9L1494 507.2M944 478.5L1494 506.6M944 478.2L1494 506.1M944 477.8L1494 505.6M944 477.1L1494 504.6M944 476.7L1494 504.0M944 476.4L1494 503.5M944 476.1L1494 503.1M944 475.7L1494 502.6M944 475.4L1494 502.1M944 475.1L1494 501.6M944 474.7L1494 501.1M944 474.4L1494 500.7M944 473.8L1494 499.7M944 473.5L1494 499.3M944 473.1L1494 498.8M944 472.8L1494 498.4M944 472.5L1494 498.0M944 472.2L1494 497.5M944 471.9L1494 497.1M944 471.6L1494 496.7M944 471.3L1494 496.3M944 470.8L1494 495.4M944 470.5L1494 495.0M944 470.2L1494 494.6M944 469.9L1494 494.2M944 469.7L1494 493.8M944 469.4L1494 493.4M944 469.1L1494 493.0M944 468.9L1494 492.7M944 468.6L1494 492.3M944 468.1L1494 491.5M944 467.8L1494 491.2M944 467.6L1494 490.8M944 467.3L1494 490.4M944 467.1L1494 490.1M944 466.8L1494 489.7M944 466.6L1494 489.4M944 466.3L1494 489.0M944 466.1L1494 488.7M944 465.6L1494 488.0M944 465.4L1494 487.7M944 465.2L1494 487.3M944 464.9L1494 487.0M944 464.7L1494 486.7M944 464.5L1494 486.3M944 464.3L1494 486.0M944 464.0L1494 485.7M944 463.8L1494 485.4M944 463.4L1494 484.8M944 463.2L1494 484.5M944 463.0L1494 484.2M944 462.7L1494 483.9M944 462.5L1494 483.6M944 462.3L1494 483.3M944 462.1L1494 483.0M944 461.9L1494 482.7M944 461.7L1494 482.4" stroke="#637c9c" stroke-opacity=".22" stroke-width=".6"/><path d="M1148.7 432L-1343.2 770M1156.4 432L-1181.1 770M1164.2 432L-1019.0 770M1172.0 432L-856.9 770M1179.7 432L-694.8 770M1187.5 432L-532.7 770M1195.2 432L-370.6 770M1203.0 432L-208.5 770M1210.8 432L-46.3 770M1218.5 432L115.8 770M1226.3 432L277.9 770M1234.1 432L440.0 770M1241.8 432L602.1 770M1249.6 432L764.2 770M1257.4 432L926.3 770M1265.1 432L1088.5 770M1272.9 432L1250.6 770M1280.6 432L1412.7 770M1288.4 432L1574.8 770M1296.2 432L1736.9 770M1303.9 432L1899.0 770M1311.7 432L2061.1 770M1319.5 432L2223.2 770M1327.2 432L2385.4 770M1335.0 432L2547.5 770M1342.7 432L2709.6 770M1350.5 432L2871.7 770M1358.3 432L3033.8 770M1366.0 432L3195.9 770M1373.8 432L3358.0 770M1381.6 432L3520.2 770M1389.3 432L3682.3 770M1397.1 432L3844.4 770M944 1128.3L1494 1443.7M944 847.0L1494 1037.9M944 724.8L1494 861.7M944 656.5L1494 763.2M944 612.8L1494 700.3M944 582.6L1494 656.7M944 560.3L1494 624.6M944 543.3L1494 600.0M944 529.8L1494 580.6M944 518.9L1494 564.9M944 509.9L1494 551.9M944 502.4L1494 541.0M944 495.9L1494 531.7M944 490.3L1494 523.7M944 485.5L1494 516.7M944 481.2L1494 510.5M944 477.5L1494 505.1M944 474.1L1494 500.2M944 471.1L1494 495.8M944 468.3L1494 491.9M944 465.9L1494 488.3M944 463.6L1494 485.1M944 461.5L1494 482.1M944 459.6L1494 479.4M944 457.9L1494 476.8M944 456.3L1494 474.5M944 454.8L1494 472.4M944 453.4L1494 470.3M944 452.1L1494 468.5M944 450.9L1494 466.7M944 449.7L1494 465.1M944 448.7L1494 463.5M944 447.7L1494 462.1M944 446.7L1494 460.7M944 445.8L1494 459.4M944 445.0L1494 458.2M944 444.2L1494 457.1M944 443.4L1494 456.0M944 442.7L1494 454.9M944 442.0L1494 454.0M944 441.4L1494 453.0M944 440.7L1494 452.1M944 440.2L1494 451.3M944 439.6L1494 450.5M944 439.0L1494 449.7M944 438.5L1494 448.9M944 438.0L1494 448.2M944 437.6L1494 447.5M944 437.1L1494 446.9M944 436.7L1494 446.3M944 436.2L1494 445.6M944 435.8L1494 445.1M944 435.5L1494 444.5M944 435.1L1494 444.0M944 434.7L1494 443.4M944 434.4L1494 442.9M944 434.0L1494 442.4M944 433.7L1494 442.0M944 433.4L1494 441.5M944 433.1L1494 441.1M944 432.8L1494 440.7M944 432.5L1494 440.3M944 432.2L1494 439.9M944 432.0L1494 439.5M944 431.7L1494 439.1M944 431.5L1494 438.7M944 431.2L1494 438.4M944 431.0L1494 438.0M944 430.7L1494 437.7M944 430.5L1494 437.4M944 430.3L1494 437.1M944 430.1L1494 436.8" stroke="#5f7690" stroke-opacity=".4" stroke-width="1.1"/></g><path d="M1331 623 C1370 622 1420 617 1455.5 611.5 L1446 673.5 C1400 675 1350 673 1314 671 Z" fill="#789fc6" opacity=".9"/><path d="M1134.4 400.6 L1343.8 393.6 L1343.8 521 L1134.4 497 Z" fill="#020202"/><path d="M1126 494.2 L1255.8 498.6 L1238.5 552 L1039 536.4 Z" fill="url(#wp)"/><path d="M1130.9 494.4 L1046.0 536.9 M1123.6 495.3 L1255.4 500.0 M1135.8 494.5 L1053.1 537.5 M1121.2 496.5 L1254.9 501.4 M1140.7 494.7 L1060.3 538.1 M1118.7 497.7 L1254.4 502.8 M1145.7 494.9 L1067.6 538.6 M1116.1 499.0 L1253.9 504.3 M1150.7 495.0 L1075.0 539.2 M1113.4 500.3 L1253.4 505.9 M1155.8 495.2 L1082.5 539.8 M1110.7 501.6 L1252.9 507.5 M1161.0 495.4 L1090.1 540.4 M1107.8 503.0 L1252.4 509.2 M1166.1 495.6 L1097.8 541.0 M1104.9 504.4 L1251.8 510.9 M1171.3 495.7 L1105.7 541.6 M1101.8 505.9 L1251.2 512.7 M1176.6 495.9 L1113.6 542.2 M1098.7 507.5 L1250.6 514.6 M1181.9 496.1 L1121.7 542.9 M1095.4 509.0 L1250.0 516.6 M1187.3 496.3 L1129.9 543.5 M1092.0 510.7 L1249.3 518.6 M1192.7 496.5 L1138.2 544.2 M1088.5 512.4 L1248.6 520.7 M1198.2 496.6 L1146.6 544.8 M1084.8 514.2 L1247.9 523.0 M1203.7 496.8 L1155.2 545.5 M1081.0 516.0 L1247.2 525.3 M1209.3 497.0 L1163.9 546.2 M1077.1 517.9 L1246.4 527.7 M1214.9 497.2 L1172.7 546.9 M1073.0 519.9 L1245.5 530.3 M1220.6 497.4 L1181.6 547.6 M1068.7 522.0 L1244.7 532.9 M1226.3 497.6 L1190.7 548.3 M1064.3 524.1 L1243.8 535.7 M1232.1 497.8 L1200.0 549.0 M1059.7 526.4 L1242.8 538.6 M1237.9 498.0 L1209.4 549.7 M1054.8 528.7 L1241.8 541.7 M1243.8 498.2 L1218.9 550.5 M1049.8 531.2 L1240.8 545.0 M1249.8 498.4 L1228.6 551.2 M1044.5 533.7 L1239.7 548.4" stroke="#c8ccd4" stroke-opacity=".55" stroke-width=".5" fill="none"/><path d="M1160.6 479.5 L1162.6 479.5 L1163.6 509 L1162.6 509 Z" fill="#b8b8b8" stroke="#8a8a8a" stroke-width=".5"/><path d="M1162 511 L1166.5 508.5 M1170 512.5 L1174 513" stroke="#d43a5a" stroke-width=".9"/><g><path d="M1001.8 503.7 L1006.9 501.6 L1011.2 502.9 L1020.2 509.2 L1018.5 513.3 L1013.0 512.6 L1006.9 513.7 L1002.6 508.9 Z" fill="#d81a50"/><path d="M1011.2 504.1 L1020.2 509.2 L1018.5 513.3 L1009.9 508.5 Z" fill="#b81444"/><path d="M990.6 522.6 L1045.3 510.1 L1051.1 512.6 L1006.9 520.5 Z" fill="#e62c5c"/><path d="M995.8 520.5 L1032.7 511.6 L1033.9 512.6 L997.5 521.9 Z" fill="#3a0a18"/><path d="M994.1 519.5 L1031.9 508.5 L1032.5 509.2 L995.1 520.5 Z" fill="#d81a50"/><path d="M990.6 522.6 L1006.9 520.0 L1007.8 548.0 L992.7 546.0 Z" fill="#d81a50"/><path d="M1006.9 520.0 L1051.1 512.6 L1049.4 533.3 L1007.8 548.0 Z" fill="#2a060f"/><path d="M1006.9 520.0 L1013.0 519.0 L1013.6 546.0 L1007.8 548.0 Z" fill="#5a0c22"/><path d="M1029.3 526.0 L1039.6 522.6 L1040.1 529.1 L1030.5 532.9 Z" fill="#9a9a9a"/><path d="M1040.1 514.4 L1050.4 512.6 L1049.4 533.6 L1041.1 535.3 Z" fill="#d81a50"/><path d="M1040.1 514.4 L1043.0 513.8 L1043.9 534.6 L1041.1 535.3 Z" fill="#b81444"/><path d="M1046.5 510.6 L1055.9 509.2 L1056.8 523.5 L1047.3 524.7 Z" fill="#5a0c22"/><path d="M1048.2 510.2 L1050.8 509.9 L1051.4 524.3 L1048.9 524.7 Z" fill="#d81a50"/><path d="M1052.8 509.6 L1054.9 509.4 L1055.6 523.6 L1053.5 524.0 Z" fill="#b81444"/><path d="M1042.2 498.9 L1071.4 500.6 L1071.7 526.4 L1050.8 523.6 L1050.8 510.9 L1042.5 509.2 Z" fill="#d81a50"/><path d="M1042.2 498.9 L1071.4 500.6 L1064.2 505.1 L1042.9 503.0 Z" fill="#e62c5c"/><path d="M1064.2 505.1 L1071.4 500.6 L1071.7 526.4 L1064.8 523.0 Z" fill="#b81444"/><ellipse cx="1004.9" cy="505.8" rx="3.2" ry="3.6" fill="#e62c5c"/></g><g>
<path d="M1152.2 403.4 L1154.6 401.8 L1161.2 409.8 L1159 412.2 Z" fill="#4a84e0"/>
<rect x="1157.8" y="394" width="13" height="16.8" rx="2.6" fill="#4a84e0"/><path d="M1166.6 394.6 H1168.4 Q1170.8 394.8 1170.8 397 V408.4 Q1170.8 410.6 1168.4 410.8 H1166.6 Z" fill="#2c58b4"/><path d="M1158.4 396 Q1158.6 394.4 1160.4 394.3 H1166 V396 Z" fill="#6fa0f0"/>
<circle cx="1161.8" cy="413.4" r="1.5" fill="#e8eefc"/>
<path d="M1160 412.6 L1169.8 412 L1170.2 419 L1160.6 419.6 Z" fill="#4a84e0"/><path d="M1166.8 412.2 L1169.8 412 L1170.2 419 L1167 419.3 Z" fill="#2c58b4"/>
<circle cx="1161.8" cy="420.4" r="1.5" fill="#e8eefc"/>
<path d="M1153 426.6 L1157.4 422 L1168.6 422 L1171.6 426.2 L1166 427.2 Z" fill="#4a84e0"/><path d="M1153 426.6 L1166 425.2 L1171.6 426.2 L1166 427.4 Z" fill="#2c58b4"/>
</g><g transform="translate(1049.0 425.1) rotate(100)"><rect x="-2.21" y="-3.51" width="4.42" height="6.50" rx=".8" fill="#f4f4f4" stroke="#222" stroke-width=".7"/></g><g transform="translate(1046.0 430.6) rotate(136)"><rect x="-2.21" y="-3.51" width="4.42" height="6.50" rx=".8" fill="#f4f4f4" stroke="#222" stroke-width=".7"/></g><g transform="translate(1040.4 433.3) rotate(172)"><rect x="-2.21" y="-3.51" width="4.42" height="6.50" rx=".8" fill="#f4f4f4" stroke="#222" stroke-width=".7"/></g><g transform="translate(1034.2 432.3) rotate(208)"><rect x="-2.21" y="-3.51" width="4.42" height="6.50" rx=".8" fill="#f4f4f4" stroke="#222" stroke-width=".7"/></g><g transform="translate(1029.9 427.7) rotate(244)"><rect x="-2.21" y="-3.51" width="4.42" height="6.50" rx=".8" fill="#f4f4f4" stroke="#222" stroke-width=".7"/></g><g transform="translate(1029.0 421.5) rotate(280)"><rect x="-2.21" y="-3.51" width="4.42" height="6.50" rx=".8" fill="#f4f4f4" stroke="#222" stroke-width=".7"/></g><g transform="translate(1032.0 416.0) rotate(316)"><rect x="-2.21" y="-3.51" width="4.42" height="6.50" rx=".8" fill="#f4f4f4" stroke="#222" stroke-width=".7"/></g><g transform="translate(1037.6 413.3) rotate(352)"><rect x="-2.21" y="-3.51" width="4.42" height="6.50" rx=".8" fill="#f4f4f4" stroke="#222" stroke-width=".7"/></g><g transform="translate(1043.8 414.3) rotate(388)"><rect x="-2.21" y="-3.51" width="4.42" height="6.50" rx=".8" fill="#f4f4f4" stroke="#222" stroke-width=".7"/></g><g transform="translate(1048.1 418.9) rotate(424)"><rect x="-2.21" y="-3.51" width="4.42" height="6.50" rx=".8" fill="#f4f4f4" stroke="#222" stroke-width=".7"/></g><circle cx="1039" cy="423.3" r="7.28" fill="url(#lb)" stroke="#333" stroke-width=".6"/><path d="M1046 431 L1061 443" stroke="#fff" stroke-width="1.5"/><path d="M1065 446.6 L1057.5 444.2 L1061.5 439.6 Z" fill="#fff"/><g transform="translate(1095.6 444.7) rotate(95)"><rect x="-1.70" y="-2.70" width="3.40" height="5.00" rx=".8" fill="#f4f4f4" stroke="#222" stroke-width=".7"/></g><g transform="translate(1093.7 449.1) rotate(131)"><rect x="-1.70" y="-2.70" width="3.40" height="5.00" rx=".8" fill="#f4f4f4" stroke="#222" stroke-width=".7"/></g><g transform="translate(1089.6 451.6) rotate(167)"><rect x="-1.70" y="-2.70" width="3.40" height="5.00" rx=".8" fill="#f4f4f4" stroke="#222" stroke-width=".7"/></g><g transform="translate(1084.8 451.2) rotate(203)"><rect x="-1.70" y="-2.70" width="3.40" height="5.00" rx=".8" fill="#f4f4f4" stroke="#222" stroke-width=".7"/></g><g transform="translate(1081.1 448.0) rotate(239)"><rect x="-1.70" y="-2.70" width="3.40" height="5.00" rx=".8" fill="#f4f4f4" stroke="#222" stroke-width=".7"/></g><g transform="translate(1080.0 443.3) rotate(275)"><rect x="-1.70" y="-2.70" width="3.40" height="5.00" rx=".8" fill="#f4f4f4" stroke="#222" stroke-width=".7"/></g><g transform="translate(1081.9 438.9) rotate(311)"><rect x="-1.70" y="-2.70" width="3.40" height="5.00" rx=".8" fill="#f4f4f4" stroke="#222" stroke-width=".7"/></g><g transform="translate(1086.0 436.4) rotate(347)"><rect x="-1.70" y="-2.70" width="3.40" height="5.00" rx=".8" fill="#f4f4f4" stroke="#222" stroke-width=".7"/></g><g transform="translate(1090.8 436.8) rotate(383)"><rect x="-1.70" y="-2.70" width="3.40" height="5.00" rx=".8" fill="#f4f4f4" stroke="#222" stroke-width=".7"/></g><g transform="translate(1094.5 440.0) rotate(419)"><rect x="-1.70" y="-2.70" width="3.40" height="5.00" rx=".8" fill="#f4f4f4" stroke="#222" stroke-width=".7"/></g><circle cx="1087.8" cy="444" r="5.60" fill="url(#lb)" stroke="#333" stroke-width=".6"/><path d="M1094 450 L1103.5 458.5" stroke="#fff" stroke-width="1.3"/><path d="M1107 461.6 L1100.6 459.6 L1104 455.6 Z" fill="#fff"/><path d="M1357 372.4 L1343.5 385" stroke="#b8283c" stroke-width=".9"/><path d="M1343.5 385 L1345.3 381.1 L1347.5 383.4 Z" fill="#b8283c"/><path d="M1074.5 484 L1064 496.2" stroke="#d8323c" stroke-width=".9"/><path d="M1064 496.2 L1065.4 492.1 L1067.8 494.2 Z" fill="#d8323c"/><path d="M1247.8 543 L1238.3 552" stroke="#b8283c" stroke-width=".9"/><path d="M1238.3 552 L1240.1 548.1 L1242.3 550.4 Z" fill="#b8283c"/><path d="M972.5 738.5 V713.5" stroke="#1030e8" stroke-width="1"/><path d="M972.5 738.5 H997" stroke="#20e020" stroke-width="1"/><path d="M972.5 738.5 L978 738.9" stroke="#e82020" stroke-width="1"/><circle cx="963.2" cy="748.6" r="5.7" fill="#3f5f8a" fill-opacity=".85" stroke="#7d9fcc" stroke-width="1.4"/></svg>
<div style="left:0;top:0;width:460px;height:56px;transform-origin:0 0;transform:matrix3d(0.597842,-0.1910981,0,-0.0006029832,0,0.8839286,0,0,0,0,1,0,35,207.5,0,1);color:#ff4a72;font-size:11px;line-height:14px;white-space:nowrap;-webkit-text-stroke:.35px #ff4a72;"><span style="left:0px;top:0px;transform-origin:0 50%;transform:scaleX(1.0541);">Things to check before you start:</span><span style="left:16px;top:14px;transform-origin:0 50%;transform:scaleX(1.0541);">Window &gt; Load Layout &gt; StarTracker Setup</span><span style="left:16px;top:28px;transform-origin:0 50%;transform:scaleX(1.0541);">Edit &gt; Project Settings &gt; Plugins &gt; MoSys Virtual Production &gt; Mode = AR</span><span style="left:16px;top:42px;transform-origin:0 50%;transform:scaleX(1.0541);">Tag your AR actors with &#x27;Shadow&#x27; and enable lighting channel 1 to preview the shadow</span></div>
<span style="left:414.6px;top:235.2px;font-size:17.5px;line-height:17.5px;color:#ff3f6c;white-space:nowrap;transform-origin:0 50%;transform:rotate(-2.35deg) scaleX(0.9651);font-weight:bold;">AR video plane</span>
<span style="left:305.0px;top:412.2px;font-size:13.5px;line-height:13.5px;color:#ff3f6c;white-space:nowrap;transform-origin:0 50%;transform:rotate(2.70deg) scaleX(0.8693);font-weight:bold;">AR shadow plane</span>
<span style="left:130.5px;top:351.1px;font-size:15px;line-height:15px;color:#ff4a74;white-space:nowrap;transform-origin:0 50%;transform:rotate(1.38deg) scaleX(0.8774);font-weight:bold;">MoSys AR Camera</span>
<span style="left:226.1px;top:262.6px;font-size:7.2px;line-height:7.2px;color:#f0708e;white-space:nowrap;transform-origin:0 50%;transform:rotate(-1.26deg) scaleX(1.0174);">AR shadow camera</span>
<span style="left:101.9px;top:287.3px;font-size:8px;line-height:8px;color:#ff4a72;white-space:nowrap;transform-origin:0 50%;transform:rotate(-0.85deg) scaleX(1.0283);">Shadow light</span>
<span style="left:150.0px;top:311.1px;font-size:7px;line-height:7px;color:#ff4a72;white-space:nowrap;transform-origin:0 50%;transform:rotate(-0.62deg) scaleX(0.9909);">Normal light</span>
<span style="left:225.6px;top:345.2px;font-size:7.5px;line-height:7.5px;color:#ff4a72;white-space:nowrap;transform-origin:0 50%;transform:rotate(0.80deg) scaleX(0.9532);font-weight:bold;">Object for calibration</span>
<span style="left:225.6px;top:380.6px;font-size:7.5px;line-height:7.5px;color:#e0506c;white-space:nowrap;transform-origin:0 50%;transform:rotate(1.56deg) scaleX(1.0117);">Origin of your map</span>
<span style="left:32.5px;top:590.5px;font-size:10px;line-height:10px;color:#1838f0;white-space:nowrap;transform-origin:0 50%;transform:rotate(0.00deg) scaleX(1.0639);">Z</span>
<span style="left:34.5px;top:617.0px;font-size:10px;line-height:10px;color:#f01818;white-space:nowrap;transform-origin:0 50%;transform:rotate(0.00deg) scaleX(1.0495);">X</span>
<span style="left:54.5px;top:617.0px;font-size:10px;line-height:10px;color:#18e818;white-space:nowrap;transform-origin:0 50%;transform:rotate(0.00deg) scaleX(1.0495);">Y</span>
<span style="left:17.0px;top:626.8px;font-size:8.5px;line-height:8.5px;color:#7fa2cf;white-space:nowrap;transform-origin:0 50%;transform:rotate(0.00deg) scaleX(0.8476);font-weight:bold;">?</span>
</div>
<div style="left:943px;top:116.7px;width:550.4px;height:652.6px;border:1.4px solid #e2a610;"></div>
<svg style="left:943px;top:116.7px" width="8" height="8"><path d="M0 0 H7.5 L0 7.5 Z" fill="#e2a610"/></svg>
<div class="vb" style="left:947.6px;top:121.3px;width:20.8px;height:25px;"></div>
<svg style="left:953.5px;top:131.5px" width="9" height="6"><path d="M0 0 H8.6 L4.3 4.8Z" fill="#1a1a1a"/></svg>
<div class="vb" style="left:973.4px;top:121.3px;width:94.2px;height:25px;"></div>
<span class="t" style="left:998.50px;top:128.20px;font-size:12.5px;color:#222;transform:scaleX(0.8834);font-weight:bold;">Perspective</span>
<svg style="left:979px;top:128px" width="17" height="13" viewBox="0 0 17 13"><path d="M1 7 L10 1.5 L16 4 L7 10 Z" fill="#5c8ce8"/><path d="M1 7 L7 10 L7 12 L1 9Z" fill="#3a64c0"/><path d="M7 10 L16 4 V6 L7 12Z" fill="#2c50a0"/></svg>
<div class="vb" style="left:1072.6px;top:121.3px;width:46px;height:25px;"></div>
<span class="t" style="left:1097.50px;top:128.20px;font-size:12.5px;color:#222;transform:scaleX(0.9169);font-weight:bold;">Lit</span>
<svg style="left:1078px;top:126.5px" width="17" height="17" viewBox="0 0 17 17"><path d="M1.5 4 L8.5 1 L15.5 4 L15.5 12 L8.5 16 L1.5 12Z" fill="#3f6fe0"/><path d="M1.5 4 L8.5 1 L15.5 4 L8.5 7.5Z" fill="#7ea4f4"/><path d="M8.5 7.5 L15.5 4 V12 L8.5 16Z" fill="#2850b8"/></svg>
<div class="vb" style="left:1123.3px;top:121.3px;width:43.2px;height:25px;"></div>
<span class="t" style="left:1129.50px;top:128.20px;font-size:12.5px;color:#222;transform:scaleX(0.9001);font-weight:bold;">Show</span>
<div class="vb" style="left:1171.2px;top:121.3px;width:71.5px;height:25px;"></div>
<div style="left:1171.2px;top:121.3px;width:23.6px;height:25px;background:#ad7b38;border:1px solid #1c2433;border-radius:5px 0 0 5px;"></div>
<svg style="left:1174.5px;top:125.5px" width="17" height="17" viewBox="0 0 17 17"><path d="M8.5 1 L11.3 4.4 H9.5 V7.5 H12.6 V5.7 L16 8.5 L12.6 11.3 V9.5 H9.5 V12.6 H11.3 L8.5 16 L5.7 12.6 H7.5 V9.5 H4.4 V11.3 L1 8.5 L4.4 5.7 V7.5 H7.5 V4.4 H5.7 Z" fill="#1a1a1a"/></svg>
<svg style="left:1198.5px;top:126px" width="17" height="17" viewBox="0 0 17 17"><path d="M12.8 5.2 A5.6 5.6 0 1 1 6.5 3.4" fill="none" stroke="#1a1a1a" stroke-width="1.8"/><path d="M10 1.2 L14.6 4.6 L9.6 6.8 Z" fill="#1a1a1a"/><circle cx="8.3" cy="9" r="3" fill="#4a6ad0"/></svg>
<svg style="left:1222px;top:126px" width="18" height="17" viewBox="0 0 18 17"><path d="M10 2 H16 V8 L14 6 L10.5 9.5 L8.5 7.5 L12 4 Z" fill="#1a1a1a"/><path d="M2 10 L6 8.5 L9 10.5 L9 14 L5 15.5 L2 13.5Z" fill="#4a6ad0"/><path d="M2 15 L5 12" stroke="#1a1a1a" stroke-width="1.5"/><path d="M1.5 15.8 L2 12.6 L4.8 15.3Z" fill="#1a1a1a"/></svg>
<div class="vb" style="left:1246.8px;top:121.3px;width:22.7px;height:25px;"></div>
<svg style="left:1250px;top:126.3px" width="16" height="16" viewBox="0 0 16 16"><circle cx="8" cy="8" r="6.6" fill="none" stroke="#1a1a1a" stroke-width="1.2"/><path d="M4 4 C6 3 7 4 7.5 5.5 C6.5 7 5 7 4.5 9 C3.5 8 3 6 4 4Z M9.5 2.5 C11 3 12.5 4.5 13 6 C12 7 11 6.5 10 7.5 C9 6.5 9.8 4.5 9.5 2.5Z M7 9.5 C8.5 9 10 10 10 11.5 C9.5 13 8.5 13.8 7.8 14 C7.5 12.5 6.5 11 7 9.5Z" fill="#1a1a1a"/></svg>
<div class="vb" style="left:1273.6px;top:121.3px;width:81px;height:25px;"></div>
<div style="left:1297.8px;top:121.3px;width:24.6px;height:25px;background:#ad7b38;border:1px solid #1c2433;"></div>
<svg style="left:1277px;top:125.5px" width="18" height="19" viewBox="0 0 18 19"><path d="M1.5 8 C5 10 11 9 16.5 5" fill="none" stroke="#1a1a1a" stroke-width="1.1"/><path d="M6.5 2 L9.5 12" stroke="#1a1a1a" stroke-width="1.2"/><path d="M4 4.5 L6.3 1.2 L9.4 3.4Z M13 1.5 L16.8 2.6 L14.6 6Z" fill="#1a1a1a"/><path d="M6 15.5 H11 L8.5 18Z" fill="#1a1a1a"/></svg>
<svg style="left:1302.5px;top:127px" width="15" height="15" viewBox="0 0 15 15"><path d="M1 1 H14 V14 H1Z M1 4.25 H14 M1 7.5 H14 M1 10.75 H14 M4.25 1 V14 M7.5 1 V14 M10.75 1 V14" fill="none" stroke="#1a1a1a" stroke-width="1"/></svg>
<span class="t" style="left:1331.50px;top:125.28px;font-size:13px;color:#222;transform:scaleX(0.9335);-webkit-text-stroke:.35px #222;">10</span>
<svg style="left:1336.5px;top:140.3px" width="5" height="3"><path d="M0 0 H4.6 L2.3 2.6Z" fill="#1a1a1a"/></svg>
<div class="vb" style="left:1358.6px;top:121.3px;width:60.8px;height:25px;"></div>
<div style="left:1358.6px;top:121.3px;width:23.6px;height:25px;background:#ad7b38;border:1px solid #1c2433;border-radius:5px 0 0 5px;"></div>
<svg style="left:1362.5px;top:126px" width="16" height="16" viewBox="0 0 16 16"><path d="M2 14 L7.5 2 L14 14 Z" fill="none" stroke="#1a1a1a" stroke-width="1.4"/><path d="M5 8.5 C8 8.5 10 10.5 10.5 14" fill="none" stroke="#1a1a1a" stroke-width="1.1"/></svg>
<span class="t" style="left:1391.50px;top:125.28px;font-size:13px;color:#222;transform:scaleX(0.9410);-webkit-text-stroke:.35px #222;">10°</span>
<svg style="left:1398.7px;top:140.3px" width="5" height="3"><path d="M0 0 H4.6 L2.3 2.6Z" fill="#1a1a1a"/></svg>
<div class="vb" style="left:1449.3px;top:121.3px;width:15.5px;height:25px;"></div>
<span class="t" style="left:1452.30px;top:128.00px;font-size:12.5px;color:#dde4f0;transform:scaleX(1.0500);">»</span>
<div style="left:1474.4px;top:130.6px;width:9.2px;height:9px;border:2px solid #eef2fa;background:#5a86c4;box-shadow:0 0 0 .6px #2a3a5a;"></div>
<div style="left:1477px;top:128px;width:9px;height:9px;border:2px solid #eef2fa;border-left:none;border-bottom:none;"></div>
<div style="left:1496px;top:47px;width:5px;height:732px;background:#222;"></div>
<div style="left:1501px;top:47px;width:427px;height:22px;background:#222;"></div>
<div class="tab" style="left:1505px;top:47.5px;width:150px;height:21.5px;"></div>
<span class="t sh" style="left:1532.50px;top:51.70px;font-size:12.5px;color:#e8e8e8;transform:scaleX(0.9541);">World Outliner</span>
<span class="t" style="left:1638.00px;top:52.78px;font-size:13px;color:#6a6a6a;transform:scaleX(1.0000);">×</span>
<svg style="left:1510.5px;top:50px" width="17" height="16" viewBox="0 0 17 16"><path d="M1 1.5 H4 M1 5.5 H4 M1 9.5 H4 M1 13.5 H4" stroke="#dfe6f4" stroke-width="2"/><path d="M6 1.5 H16 M6 5.5 H16 M6 9.5 H16 M6 13.5 H16" stroke="#e8ecf6" stroke-width="2.2"/><path d="M6 2.6 H16 M6 6.6 H16 M6 10.6 H16 M6 14.6 H16" stroke="#5a7ad0" stroke-width=".9"/></svg>
<div class="pn" style="left:1501px;top:69px;width:427px;height:235px;"></div>
<div style="left:1509px;top:79px;width:383px;height:17.6px;background:#cacaca;border-radius:3px;box-shadow:inset 0 1px 0 #a8a8a8;"></div>
<span class="t" style="left:1513.90px;top:82.10px;font-size:12.5px;color:#8c8c8c;transform:scaleX(0.9116);">Search...</span>
<svg style="left:1874.5px;top:80.5px" width="14.5" height="14.5" viewBox="0 0 14 14"><circle cx="8.3" cy="5.6" r="4.2" fill="none" stroke="#000" stroke-width="1.7"/><path d="M5.3 8.8 L1.2 12.8" stroke="#000" stroke-width="2.4" stroke-linecap="round"/></svg>
<svg style="left:1899px;top:79px" width="18" height="17" viewBox="0 0 18 17"><path d="M7 4 L12 2 L17 3 L16.5 12 L8 13 Z" fill="#8ea4e6"/><path d="M7 5.5 L16.8 4.5 L16.5 12 L8 13Z" fill="#6f8ad8"/><path d="M1 10.5 H9 M5 6.5 V14.5" stroke="#fff" stroke-width="2"/></svg>
<div style="left:1509px;top:102px;width:411px;height:22.5px;background:linear-gradient(#2c2c2c,#1a1a1a 50%,#141414);border:1px solid #111;"></div>
<div style="left:1524.5px;top:103px;width:1px;height:20.5px;background:#3a3a3a;"></div>
<div style="left:1795px;top:103px;width:1px;height:20.5px;background:#3a3a3a;"></div>
<span class="t" style="left:1528.50px;top:107.00px;font-size:12.5px;color:#f0f0f0;transform:scaleX(0.9744);">Label</span>
<span class="t" style="left:1799.50px;top:107.00px;font-size:12.5px;color:#f0f0f0;transform:scaleX(0.9595);">Type</span>
<svg style="left:1655.5px;top:104px" width="9" height="5"><path d="M0 4.5 H8.6 L4.3 0Z" fill="#e8e8e8"/></svg>
<svg style="left:1892px;top:117px" width="9" height="6"><path d="M0 0 H8 M0 1.8 H8 L4 5.6Z" fill="#a8a8a8" stroke="#a8a8a8" stroke-width=".8"/></svg>
<div style="left:1509px;top:124.5px;width:411px;height:144.5px;overflow:hidden;">
<svg style="left:1px;top:5.100000000000023px" width="15" height="10" viewBox="0 0 15 10"><path d="M.6 5.2 C3 1.2 12 1.2 14.4 5.2 C12 9 3 9 .6 5.2Z" fill="#f2f5fc" stroke="#2a3a6a" stroke-width=".7"/><circle cx="7.5" cy="5.2" r="2.7" fill="#4a6ad0"/><circle cx="7.5" cy="5.2" r="1.3" fill="#10183a"/><path d="M.8 4.4 C4 .6 11 .6 14.2 4.4" fill="none" stroke="#1a2448" stroke-width="1.2"/></svg>
<svg style="left:23.5px;top:5.100000000000023px" width="8" height="8"><path d="M7 .5 V7 H.5Z" fill="#c8c8c8"/></svg>
<svg style="left:32px;top:1.1000000000000227px" width="19" height="17" viewBox="0 0 19 17"><path d="M1 9 L6 1 L10 4 L14 0.5 L18 9 L10 16Z" fill="#8c8c8c"/><path d="M6 1 L10 4 L10 16 L1 9Z" fill="#c4c4c4"/><path d="M10 4 L14 .5 L18 9 L10 16Z" fill="#a4a4a4"/><path d="M4 9 L10 7 L16 9 L10 13Z" fill="#e4e4e4"/></svg>
<span class="t" style="left:55.70px;top:3.30px;font-size:12.5px;color:#e4e4e4;transform:scaleX(0.9453);">ARSample (Editor)</span>
<span class="t" style="left:286.50px;top:3.30px;font-size:12.5px;color:#9a9a9a;transform:scaleX(0.9409);">World</span>
<svg style="left:1px;top:23.25px" width="15" height="10" viewBox="0 0 15 10"><path d="M.6 5.2 C3 1.2 12 1.2 14.4 5.2 C12 9 3 9 .6 5.2Z" fill="#f2f5fc" stroke="#2a3a6a" stroke-width=".7"/><circle cx="7.5" cy="5.2" r="2.7" fill="#4a6ad0"/><circle cx="7.5" cy="5.2" r="1.3" fill="#10183a"/><path d="M.8 4.4 C4 .6 11 .6 14.2 4.4" fill="none" stroke="#1a2448" stroke-width="1.2"/></svg>
<svg style="left:35.5px;top:23.25px" width="8" height="8"><path d="M7 .5 V7 H.5Z" fill="#c8c8c8"/></svg>
<svg style="left:45px;top:21.75px" width="17" height="13" viewBox="0 0 17 13"><path d="M1 1 H6 L7.5 2.6 H14 V12 H1Z" fill="#d8d8d8"/><path d="M3 4.5 H16.5 L14 12 H1Z" fill="#fafafa"/></svg>
<span class="t" style="left:67.50px;top:21.45px;font-size:12.5px;color:#e4e4e4;transform:scaleX(1.0014);">Instructions</span>
<span class="t" style="left:286.50px;top:21.45px;font-size:12.5px;color:#9a9a9a;transform:scaleX(0.9597);">Folder</span>
<svg style="left:1px;top:42.20000000000002px" width="15" height="10" viewBox="0 0 15 10"><path d="M.6 5.2 C3 1.2 12 1.2 14.4 5.2 C12 9 3 9 .6 5.2Z" fill="#f2f5fc" stroke="#2a3a6a" stroke-width=".7"/><circle cx="7.5" cy="5.2" r="2.7" fill="#4a6ad0"/><circle cx="7.5" cy="5.2" r="1.3" fill="#10183a"/><path d="M.8 4.4 C4 .6 11 .6 14.2 4.4" fill="none" stroke="#1a2448" stroke-width="1.2"/></svg>
<svg style="left:57px;top:37.70000000000002px" width="18" height="17" viewBox="0 0 18 17"><ellipse cx="11" cy="14" rx="6" ry="2.4" fill="#1c1c1c" opacity=".7"/><circle cx="9.5" cy="9.3" r="5.8" fill="url(#sph)"/><circle cx="3" cy="3.2" r="2.5" fill="#f08020"/></svg>
<span class="t" style="left:80.30px;top:40.40px;font-size:12.5px;color:#e4e4e4;transform:scaleX(1.0062);">CalibrationTag</span>
<span class="t" style="left:288.70px;top:40.40px;font-size:12.5px;color:#6fa0ff;transform:scaleX(1.0292);border-bottom:1px dotted #6fa0ff;padding-bottom:0px;line-height:13px;">Edit MoSysTag</span>
<svg style="left:1px;top:61.150000000000006px" width="15" height="10" viewBox="0 0 15 10"><path d="M.6 5.2 C3 1.2 12 1.2 14.4 5.2 C12 9 3 9 .6 5.2Z" fill="#f2f5fc" stroke="#2a3a6a" stroke-width=".7"/><circle cx="7.5" cy="5.2" r="2.7" fill="#4a6ad0"/><circle cx="7.5" cy="5.2" r="1.3" fill="#10183a"/><path d="M.8 4.4 C4 .6 11 .6 14.2 4.4" fill="none" stroke="#1a2448" stroke-width="1.2"/></svg>
<svg style="left:47.5px;top:61.150000000000006px" width="8" height="8"><path d="M7 .5 V7 H.5Z" fill="#c8c8c8"/></svg>
<svg style="left:57px;top:56.650000000000006px" width="18" height="17" viewBox="0 0 18 17"><ellipse cx="11" cy="14" rx="6" ry="2.4" fill="#1c1c1c" opacity=".7"/><circle cx="9.5" cy="9.3" r="5.8" fill="url(#sph)"/><circle cx="3" cy="3.2" r="2.5" fill="#f08020"/></svg>
<span class="t" style="left:80.30px;top:59.35px;font-size:12.5px;color:#e4e4e4;transform:scaleX(0.9657);">CheckList</span>
<span class="t" style="left:288.70px;top:59.35px;font-size:12.5px;color:#6fa0ff;transform:scaleX(1.0460);border-bottom:1px dotted #6fa0ff;padding-bottom:0px;line-height:13px;">Edit MoSysText</span>
<svg style="left:1px;top:80.10000000000002px" width="15" height="10" viewBox="0 0 15 10"><path d="M.6 5.2 C3 1.2 12 1.2 14.4 5.2 C12 9 3 9 .6 5.2Z" fill="#f2f5fc" stroke="#2a3a6a" stroke-width=".7"/><circle cx="7.5" cy="5.2" r="2.7" fill="#4a6ad0"/><circle cx="7.5" cy="5.2" r="1.3" fill="#10183a"/><path d="M.8 4.4 C4 .6 11 .6 14.2 4.4" fill="none" stroke="#1a2448" stroke-width="1.2"/></svg>
<svg style="left:69px;top:75.60000000000002px" width="18" height="17" viewBox="0 0 18 17"><ellipse cx="11" cy="14" rx="6" ry="2.4" fill="#1c1c1c" opacity=".7"/><circle cx="9.5" cy="9.3" r="5.8" fill="url(#sph)"/><circle cx="3" cy="3.2" r="2.5" fill="#f08020"/></svg>
<span class="t" style="left:91.70px;top:78.30px;font-size:12.5px;color:#e4e4e4;transform:scaleX(0.9704);">LayoutCheck</span>
<span class="t" style="left:288.70px;top:78.30px;font-size:12.5px;color:#6fa0ff;transform:scaleX(1.0460);border-bottom:1px dotted #6fa0ff;padding-bottom:0px;line-height:13px;">Edit MoSysText</span>
<svg style="left:1px;top:99.05000000000001px" width="15" height="10" viewBox="0 0 15 10"><path d="M.6 5.2 C3 1.2 12 1.2 14.4 5.2 C12 9 3 9 .6 5.2Z" fill="#f2f5fc" stroke="#2a3a6a" stroke-width=".7"/><circle cx="7.5" cy="5.2" r="2.7" fill="#4a6ad0"/><circle cx="7.5" cy="5.2" r="1.3" fill="#10183a"/><path d="M.8 4.4 C4 .6 11 .6 14.2 4.4" fill="none" stroke="#1a2448" stroke-width="1.2"/></svg>
<svg style="left:69px;top:94.55000000000001px" width="18" height="17" viewBox="0 0 18 17"><ellipse cx="11" cy="14" rx="6" ry="2.4" fill="#1c1c1c" opacity=".7"/><circle cx="9.5" cy="9.3" r="5.8" fill="url(#sph)"/><circle cx="3" cy="3.2" r="2.5" fill="#f08020"/></svg>
<span class="t" style="left:91.70px;top:97.25px;font-size:12.5px;color:#e4e4e4;transform:scaleX(0.9416);">ModeCheck</span>
<span class="t" style="left:288.70px;top:97.25px;font-size:12.5px;color:#6fa0ff;transform:scaleX(1.0460);border-bottom:1px dotted #6fa0ff;padding-bottom:0px;line-height:13px;">Edit MoSysText</span>
<svg style="left:1px;top:118.0px" width="15" height="10" viewBox="0 0 15 10"><path d="M.6 5.2 C3 1.2 12 1.2 14.4 5.2 C12 9 3 9 .6 5.2Z" fill="#f2f5fc" stroke="#2a3a6a" stroke-width=".7"/><circle cx="7.5" cy="5.2" r="2.7" fill="#4a6ad0"/><circle cx="7.5" cy="5.2" r="1.3" fill="#10183a"/><path d="M.8 4.4 C4 .6 11 .6 14.2 4.4" fill="none" stroke="#1a2448" stroke-width="1.2"/></svg>
<svg style="left:69px;top:113.5px" width="18" height="17" viewBox="0 0 18 17"><ellipse cx="11" cy="14" rx="6" ry="2.4" fill="#1c1c1c" opacity=".7"/><circle cx="9.5" cy="9.3" r="5.8" fill="url(#sph)"/><circle cx="3" cy="3.2" r="2.5" fill="#f08020"/></svg>
<span class="t" style="left:91.70px;top:116.20px;font-size:12.5px;color:#e4e4e4;transform:scaleX(0.9516);">ShadowCheck</span>
<span class="t" style="left:288.70px;top:116.20px;font-size:12.5px;color:#6fa0ff;transform:scaleX(1.0460);border-bottom:1px dotted #6fa0ff;padding-bottom:0px;line-height:13px;">Edit MoSysText</span>
<svg style="left:1px;top:136.95000000000005px" width="15" height="10" viewBox="0 0 15 10"><path d="M.6 5.2 C3 1.2 12 1.2 14.4 5.2 C12 9 3 9 .6 5.2Z" fill="#f2f5fc" stroke="#2a3a6a" stroke-width=".7"/><circle cx="7.5" cy="5.2" r="2.7" fill="#4a6ad0"/><circle cx="7.5" cy="5.2" r="1.3" fill="#10183a"/><path d="M.8 4.4 C4 .6 11 .6 14.2 4.4" fill="none" stroke="#1a2448" stroke-width="1.2"/></svg>
<svg style="left:57px;top:132.45000000000005px" width="18" height="17" viewBox="0 0 18 17"><ellipse cx="11" cy="14" rx="6" ry="2.4" fill="#1c1c1c" opacity=".7"/><circle cx="9.5" cy="9.3" r="5.8" fill="url(#sph)"/><circle cx="3" cy="3.2" r="2.5" fill="#f08020"/></svg>
<span class="t" style="left:80.30px;top:135.15px;font-size:12.5px;color:#e4e4e4;transform:scaleX(0.9795);">OriginTag</span>
<span class="t" style="left:288.70px;top:135.15px;font-size:12.5px;color:#6fa0ff;transform:scaleX(1.0292);border-bottom:1px dotted #6fa0ff;padding-bottom:0px;line-height:13px;">Edit MoSysTag</span>
</div>
<div style="left:1911.5px;top:128px;width:1px;height:140px;background:#5a5a5a;"></div>
<div style="left:1907px;top:128px;width:9.8px;height:71px;background:#fff;border-radius:1px;"></div>
<div style="left:1509px;top:269px;width:411px;height:1.2px;background:#6a6a6a;"></div>
<span class="t" style="left:1516.80px;top:278.10px;font-size:12.5px;color:#e4e4e4;transform:scaleX(0.9900);">19 actors</span>
<span class="t" style="left:1834.90px;top:278.10px;font-size:12.5px;color:#e4e4e4;transform:scaleX(0.9576);">View Options</span>
<svg style="left:1814.5px;top:279px" width="17" height="11" viewBox="0 0 17 11"><path d="M.5 5.5 C3.5 1 13.5 1 16.5 5.5 C13.5 10 3.5 10 .5 5.5Z" fill="#e8e8e8"/><circle cx="8.5" cy="5.5" r="3" fill="#5a5a8a"/><circle cx="8.5" cy="5.5" r="1.4" fill="#e8e8e8"/></svg>
<svg style="left:1908px;top:282.5px" width="9" height="5"><path d="M0 0 H8.2 L4.1 4.5Z" fill="#d8d8d8"/></svg>
<div style="left:1501px;top:304px;width:427px;height:5.5px;background:#222;"></div>
<div class="tabi" style="left:1505px;top:309.5px;width:150px;height:21.5px;"></div>
<span class="t sh" style="left:1532.50px;top:313.70px;font-size:12.5px;color:#e8e8e8;transform:scaleX(0.9684);">Details</span>
<span class="t" style="left:1638.00px;top:314.78px;font-size:13px;color:#6a6a6a;transform:scaleX(1.0000);">×</span>
<svg style="left:1510.5px;top:311.5px" width="18" height="18" viewBox="0 0 18 18"><circle cx="7.2" cy="7.2" r="5.6" fill="#f0f0f0" stroke="#5a7ad0" stroke-width="1.3"/><path d="M11.5 11.5 L16.5 16.5" stroke="#5a7ad0" stroke-width="2.2" stroke-linecap="round"/><path d="M7.2 6.6 V10.5 M7.2 4 V5" stroke="#222" stroke-width="1.5"/></svg>
<div class="tab" style="left:1656.3px;top:309.5px;width:150px;height:21.5px;"></div>
<span class="t sh" style="left:1683.50px;top:313.70px;font-size:12.5px;color:#e8e8e8;transform:scaleX(0.9660);">Sony Control</span>
<span class="t" style="left:1788.80px;top:314.78px;font-size:13px;color:#6a6a6a;transform:scaleX(1.0000);">×</span>
<svg style="left:1661.7px;top:315px" width="16.3" height="10.5" viewBox="0 0 39.5 27.5" preserveAspectRatio="none"><path fill="#e4006c" d="M0 0 H19 C22 0 23.75 2 23.75 5 V27.5 H15.8 V8.2 C15.8 7.6 15.4 7.25 14.8 7.25 H8.3 V27.5 H0 Z"/><path fill="#e4006c" d="M23.9 .3 H33.5 C37 .3 39.5 2.6 39.5 6.2 V27.5 H30.8 V9 C30.8 7.8 30.2 7.25 29 7.25 H26.3 Z"/></svg>
<div class="pn" style="left:1501px;top:331px;width:427px;height:440px;"></div>
<span class="t" style="left:1513.90px;top:352.52px;font-size:27px;color:#fff;transform:scaleX(1.4744);font-weight:bold;font-family:'Liberation Serif',serif;-webkit-text-stroke:.5px #fff;">SONY</span>
<div style="left:1640px;top:355px;width:98.3px;height:20px;background:#808080;border-radius:1px;"></div>
<span class="t" style="left:1665.70px;top:359.74px;font-size:11.5px;color:#c0c0c0;transform:scaleX(1.0051);">192.168.0.54</span>
<div class="btn" style="left:1748.5px;top:354.5px;width:67px;height:22px;"></div>
<span class="t" style="left:1753.10px;top:359.80px;font-size:12.5px;color:#000;transform:scaleX(0.8372);font-weight:bold;">Disconnect</span>
<span class="t" style="left:1510.50px;top:401.14px;font-size:11.5px;color:#d0d0d0;transform:scaleX(0.8861);">Sony Venice |6.0</span>
<div style="left:1511px;top:423.3px;width:116px;height:55.6px;background:#000;"></div>
<div style="left:1511px;top:558.6px;width:116px;height:56.2px;background:#000;"></div>
<div style="left:1629px;top:423.3px;width:116px;height:55.6px;background:#000;"></div>
<div style="left:1629px;top:558.6px;width:116px;height:56.2px;background:#000;"></div>
<div style="left:1747px;top:423.3px;width:116px;height:55.6px;background:#000;"></div>
<div style="left:1747px;top:558.6px;width:116px;height:56.2px;background:#000;"></div>
<div style="left:1511px;top:478.9px;width:352px;height:79.7px;background:#262626;"></div>
<span class="t" style="left:1558.15px;top:426.14px;font-size:11.5px;color:#fff;transform:scaleX(0.9700);">FPS</span>
<span class="t" style="left:1681.73px;top:426.14px;font-size:11.5px;color:#fff;transform:scaleX(0.9700);">EI</span>
<span class="t" style="left:1787.02px;top:426.14px;font-size:11.5px;color:#fff;transform:scaleX(0.9700);">Shutter</span>
<span class="t" style="left:1553.50px;top:444.50px;font-size:27.5px;color:#ff1010;transform:scaleX(0.9676);">25</span>
<span class="t" style="left:1664.00px;top:444.50px;font-size:27.5px;color:#ffa500;transform:scaleX(0.9567);">500</span>
<span class="t" style="left:1777.90px;top:444.50px;font-size:27.5px;color:#ffa500;transform:scaleX(0.9734);">90.0</span>
<span class="t" style="left:1534.70px;top:491.28px;font-size:13px;color:#f0f0f0;transform:scaleX(0.9766);">TCG</span>
<span class="t" style="left:1562.70px;top:489.98px;font-size:20.5px;color:#fff;transform:scaleX(1.0350);">08:54:17:11</span>
<span class="t" style="left:1692.50px;top:494.16px;font-size:11px;color:#e01010;transform:scaleX(0.9808);">25</span>
<span class="t" style="left:1707.50px;top:494.16px;font-size:11px;color:#a0a0a0;transform:scaleX(0.9541);">fps</span>
<span class="t" style="left:1747.10px;top:496.16px;font-size:11px;color:#f0f0f0;transform:scaleX(1.0182);">4K</span>
<span class="t" style="left:1769.90px;top:496.16px;font-size:11px;color:#f0f0f0;transform:scaleX(0.9622);">17:9</span>
<span class="t" style="left:1542.90px;top:518.34px;font-size:14px;color:#18b018;transform:scaleX(0.9281);">Stby</span>
<span class="t" style="left:1631.70px;top:520.46px;font-size:11px;color:#9a9a9a;transform:scaleX(0.9637);">Reel</span>
<span class="t" style="left:1662.50px;top:520.46px;font-size:11px;color:#f0f0f0;transform:scaleX(0.9459);">A001</span>
<span class="t" style="left:1700.70px;top:520.46px;font-size:11px;color:#9a9a9a;transform:scaleX(0.9545);">Shot</span>
<span class="t" style="left:1731.50px;top:520.46px;font-size:11px;color:#f0f0f0;transform:scaleX(0.9622);">C001</span>
<span class="t" style="left:1589.00px;top:536.76px;font-size:11px;color:#f0f0f0;transform:scaleX(0.9631);">181m</span>
<span class="t" style="left:1536.20px;top:564.26px;font-size:28.5px;color:#ffa500;transform:scaleX(0.9471);">Clear</span>
<span class="t" style="left:1560.94px;top:602.14px;font-size:11.5px;color:#fff;transform:scaleX(0.9700);">ND</span>
<span class="t" style="left:1759.00px;top:564.26px;font-size:28.5px;color:#ffa500;transform:scaleX(0.9275);">3200</span>
<span class="t" style="left:1825.80px;top:567.98px;font-size:13px;color:#ffa500;transform:scaleX(0.9795);">+00</span>
<span class="t" style="left:1796.02px;top:602.14px;font-size:11.5px;color:#fff;transform:scaleX(0.9700);">WB</span>
<div style="left:1501px;top:771px;width:427px;height:5px;background:#222;"></div>
<div style="left:8px;top:776px;width:1920px;height:22px;background:#222;"></div>
<div class="tabi" style="left:11px;top:776px;width:151px;height:22px;"></div>
<span class="t sh" style="left:39.50px;top:781.20px;font-size:12.5px;color:#e8e8e8;transform:scaleX(0.9668);">Content Browser</span>
<span class="t" style="left:144.90px;top:781.28px;font-size:13px;color:#6a6a6a;transform:scaleX(1.0000);">×</span>
<svg style="left:18px;top:779.5px" width="16" height="15" viewBox="0 0 16 15"><path d="M1 1 L4 0 L6 1 H15 V14 H1Z" fill="#7a94e0"/><g fill="#e8ecf8"><rect x="2.5" y="3" width="3" height="2.6"/><rect x="6.5" y="3" width="3" height="2.6"/><rect x="10.5" y="3" width="3" height="2.6"/><rect x="2.5" y="6.8" width="3" height="2.6"/><rect x="6.5" y="6.8" width="3" height="2.6"/><rect x="10.5" y="6.8" width="3" height="2.6"/><rect x="2.5" y="10.6" width="3" height="2.6"/><rect x="6.5" y="10.6" width="3" height="2.6"/><rect x="10.5" y="10.6" width="3" height="2.6"/></g></svg>
<div class="tabi" style="left:163px;top:776px;width:150px;height:22px;"></div>
<span class="t sh" style="left:190.90px;top:781.20px;font-size:12.5px;color:#e8e8e8;transform:scaleX(0.9649);">Live Link</span>
<span class="t" style="left:296.00px;top:781.28px;font-size:13px;color:#6a6a6a;transform:scaleX(1.0000);">×</span>
<svg style="left:169px;top:778.5px" width="16" height="17" viewBox="0 0 16 17"><rect x=".7" y=".7" width="14.6" height="15.6" fill="#2a3550" stroke="#8ea4e6" stroke-width="1"/><circle cx="8.5" cy="4" r="1.8" fill="#f0f0f0"/><path d="M4 7 L8 6 L12 8 M8 6 L8 11 L5 15 M8 11 L11.5 15" fill="none" stroke="#f0f0f0" stroke-width="1.5"/></svg>
<div class="tab" style="left:314px;top:776px;width:149px;height:22px;"></div>
<div style="left:315px;top:776px;width:147px;height:1.5px;background:#c9a227;border-radius:2px;"></div>
<span class="t sh" style="left:341.50px;top:781.20px;font-size:12.5px;color:#e8e8e8;transform:scaleX(0.9610);">StarTrackers</span>
<span class="t" style="left:447.00px;top:781.28px;font-size:13px;color:#6a6a6a;transform:scaleX(1.0000);">×</span>
<svg style="left:319.5px;top:781px" width="16.4" height="10.5" viewBox="0 0 39.5 27.5" preserveAspectRatio="none"><path fill="#e4006c" d="M0 0 H19 C22 0 23.75 2 23.75 5 V27.5 H15.8 V8.2 C15.8 7.6 15.4 7.25 14.8 7.25 H8.3 V27.5 H0 Z"/><path fill="#e4006c" d="M23.9 .3 H33.5 C37 .3 39.5 2.6 39.5 6.2 V27.5 H30.8 V9 C30.8 7.8 30.2 7.25 29 7.25 H26.3 Z"/></svg>
<div class="tabi" style="left:464.8px;top:776px;width:150px;height:22px;"></div>
<span class="t sh" style="left:492.20px;top:781.20px;font-size:12.5px;color:#e8e8e8;transform:scaleX(0.9814);">Output Log</span>
<span class="t" style="left:597.70px;top:781.28px;font-size:13px;color:#6a6a6a;transform:scaleX(1.0000);">×</span>
<svg style="left:472px;top:778.5px" width="15" height="17" viewBox="0 0 15 17"><path d="M1 1 H10 L14 5 V16 H1Z" fill="#e8ecf8" stroke="#5a7ad0" stroke-width="1"/><path d="M3.5 6 L7.5 9 L3.5 12 M8 12.5 H12" fill="none" stroke="#2a4ab0" stroke-width="1.6"/></svg>
<div class="pn" style="left:8px;top:798px;width:1920px;height:241.5px;"></div>
<div class="btn" style="left:19px;top:831px;width:74px;height:30px;"></div>
<span class="t" style="left:27.80px;top:838.96px;font-size:16px;color:#000;transform:scaleX(0.9148);font-weight:bold;">Refresh</span>
<div style="left:102px;top:812.2px;width:1511px;height:65.5px;background:#222;"></div>
<span class="t" style="left:105.90px;top:816.80px;font-size:12.5px;color:#7a7a7a;transform:scaleX(0.9832);font-weight:bold;">No StarTrackers found</span>
<span class="t" style="left:105.90px;top:882.10px;font-size:12.5px;color:#f0f0f0;transform:scaleX(0.9294);font-weight:bold;">1 Error</span>
<div style="left:18.2px;top:906px;width:1899.7px;height:115.5px;background:#222;"></div>
<span class="t" style="left:23.80px;top:910.42px;font-size:14.5px;color:#f4f4f4;transform:scaleX(0.9620);font-weight:bold;">Hardware ID</span>
<span class="t" style="left:179.60px;top:910.42px;font-size:14.5px;color:#f4f4f4;transform:scaleX(0.9773);font-weight:bold;">Version</span>
<span class="t" style="left:373.90px;top:910.42px;font-size:14.5px;color:#f4f4f4;transform:scaleX(0.9593);font-weight:bold;">IP Address</span>
<span class="t" style="left:528.50px;top:910.42px;font-size:14.5px;color:#f4f4f4;transform:scaleX(0.9546);font-weight:bold;">Live Link</span>
<span class="t" style="left:669.80px;top:910.42px;font-size:14.5px;color:#f4f4f4;transform:scaleX(0.9219);font-weight:bold;">Lens</span>
<span class="t" style="left:1364.40px;top:910.42px;font-size:14.5px;color:#f4f4f4;transform:scaleX(0.9567);font-weight:bold;">Auto-Configure</span>
<span class="t" style="left:1648.70px;top:910.42px;font-size:14.5px;color:#f4f4f4;transform:scaleX(0.9500);font-weight:bold;">Status</span>
<div style="left:1629px;top:843px;width:150px;height:22px;background:#fff;"></div>
<span class="t" style="left:1633.80px;top:847.78px;font-size:13px;color:#b4b4b4;transform:scaleX(0.9914);">IP Address</span>
<div class="btn" style="left:1788.5px;top:841.5px;width:128.5px;height:25px;"></div>
<span class="t" style="left:1792.90px;top:845.76px;font-size:16px;color:#000;transform:scaleX(0.9481);font-weight:bold;">Add StarTracker</span>
<div style="left:376.2px;top:795px;width:85.7px;height:31.7px;background:#f0f0f0;border:1px solid #000;box-shadow:1px 1px 2px rgba(0,0,0,.6);"></div>
<span class="t" style="left:385.80px;top:805.56px;font-size:11px;color:#000;transform:scaleX(1.0456);">StarTrackers</span>
<div style="left:8px;top:1039.8px;width:1920px;height:8.2px;background:#242e3b;"></div>
<div style="left:8px;top:1039.5px;width:48px;height:8.5px;background:#242f3f;"></div>
<div style="left:56px;top:1040px;width:344px;height:8px;background:#f2f2f2;"></div>
<div style="left:1087px;top:1040px;width:47px;height:8px;background:#4a5566;"></div>
<div style="left:1912.5px;top:1041px;width:1px;height:7px;background:#8a93a0;"></div>
<div style="left:0px;top:1042px;width:8px;height:6px;background:#1a1a1a;"></div>
<span class="t" style="left:1825.50px;top:1043.66px;font-size:11px;color:#fff;transform:scaleX(0.9446);">16:41</span>
</body></html>
